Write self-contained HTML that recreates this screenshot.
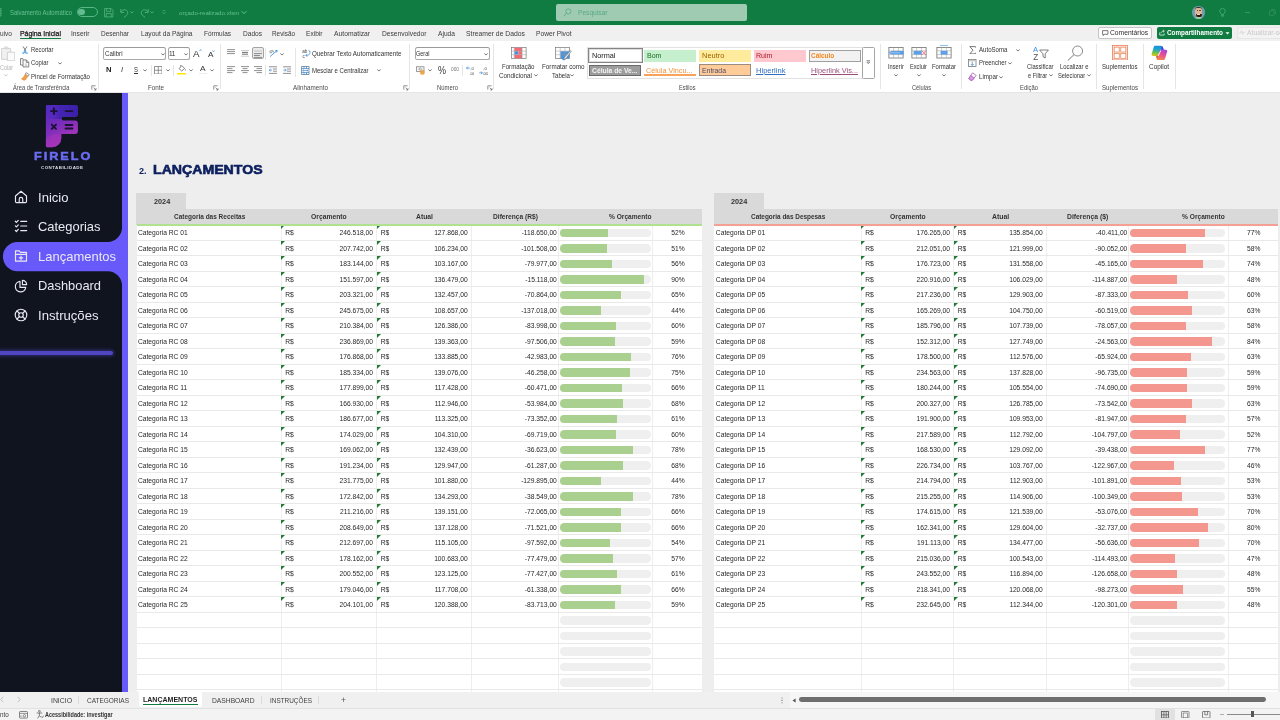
<!DOCTYPE html>
<html lang="pt-BR"><head><meta charset="utf-8"><title>orçado-realizado.xlsm - Excel</title>
<style>
html,body{margin:0;padding:0}
body{width:1280px;height:720px;overflow:hidden;position:relative;background:#eeeeee;font-family:"Liberation Sans",sans-serif;color:#262626}
div,span,svg{position:absolute;box-sizing:border-box}
.t{white-space:nowrap;transform-origin:0 50%;display:block}
.labels{left:0;top:0;width:1280px;height:720px;pointer-events:none}
#app{left:0;top:0;width:1280px;height:720px;overflow:hidden;will-change:transform}
/* title bar */
#title{left:0;top:0;width:1280px;height:25px;background:#107c41}
#search{left:556px;top:4px;width:191px;height:17px;border-radius:2px;background:#9fcbb3}
#tabs{left:0;top:25px;width:1280px;height:16px;background:#f0f0f0;border-top:0.7px solid #e3f3ea}
#ribbon{left:0;top:41px;width:1280px;height:51.4px;background:#ffffff}
#ribline{left:0;top:92.2px;width:1280px;height:0.8px;background:#e6e6e6}
.vsep{width:1px;background:#e5e5e5}
.box{border:1px solid #a8a8a8;border-top-color:#9a9a9a;border-radius:2.5px;background:#fff}
/* sidebar */
#side{left:0;top:93px;width:122.1px;height:599px;background:#10141f}
#strip{left:122px;top:93px;width:5.9px;height:599px;background:#6859fb}
/* sheet */
.tbl{background:#fff}
.hdr{background:#d9d9d9}
.row{left:0;width:100%;height:15.5px;border-bottom:1px solid #e9e9e9}
.c{top:0;height:15.5px;line-height:15.5px;font-size:6.7px;white-space:nowrap;color:#262626}
.r{text-align:right}
.vl{top:0;width:1px;background:#eeeeee}
.trk{height:8.5px;border-radius:4.25px;background:#efefef;overflow:hidden}
.fg{left:0;top:0;height:100%;background:#a9d08e}
.fr{left:0;top:0;height:100%;background:#f4978e}
.tri{width:0;height:0;border-top:4.2px solid #1e7a34;border-right:4.2px solid transparent}
/* bottom */
#sheettabs{left:0;top:692px;width:1280px;height:15.5px;background:#f0f0f0}
#status{left:0;top:707.5px;width:1280px;height:12.5px;background:#f3f3f3;border-top:1px solid #e1e1e1}

</style></head>
<body>
<div id="app">
<div id="title"></div>
<div id="search"></div>
<div id="tabs"></div>
<div id="ribbon"></div>
<div id="ribline"></div>
<svg style="left:-0.6px;top:8px;width:3px;height:9px" viewBox="0 0 3 9"><path d="M0 0.5H2M0 3H2M0 5.5H2M0 8H2M2 0.5V8" stroke="#58b687" stroke-width="0.8" fill="none"/></svg>
<div style="left:76.5px;top:7px;width:21px;height:10px;border:1px solid #58b687;border-radius:5px"></div>
<div style="left:78.2px;top:8.7px;width:6.5px;height:6.5px;border-radius:50%;background:#63bc8f"></div>
<svg style="left:104px;top:8px;width:9.5px;height:9.5px" viewBox="0 0 10 10"><path d="M0.6 0.6H7.6L9.4 2.4V9.4H0.6Z M2.6 0.6V3.6H7V0.6 M2.4 9.4V5.8H7.6V9.4" fill="none" stroke="#58b687" stroke-width="0.8"/></svg>
<svg style="left:119.5px;top:7.5px;width:9px;height:10px" viewBox="0 0 9 10"><path d="M0.8 1V4.4H4.2 M1 4.2C2.2 1.6 5.4 1 7 2.8C8.6 4.8 7.6 7.2 4 9.2" fill="none" stroke="#58b687" stroke-width="0.85"/></svg>
<svg style="left:129px;top:9.4px;width:6px;height:6px" viewBox="-3 -3 6 6"><path d="M-1.7 -0.5 L0 1.0 L1.7 -0.5" fill="none" stroke="#58b687" stroke-width="0.8"/></svg>
<svg style="left:140px;top:7.5px;width:9px;height:10px" viewBox="0 0 9 10"><path d="M8.2 1V4.4H4.8 M8 4.2C6.8 1.6 3.6 1 2 2.8C0.4 4.8 1.4 7.2 5 9.2" fill="none" stroke="#58b687" stroke-width="0.85"/></svg>
<svg style="left:149px;top:9.4px;width:6px;height:6px" viewBox="-3 -3 6 6"><path d="M-1.7 -0.5 L0 1.0 L1.7 -0.5" fill="none" stroke="#58b687" stroke-width="0.8"/></svg>
<svg style="left:161.5px;top:10px;width:4px;height:5px" viewBox="0 0 4 5"><path d="M0.6 0.6H3.4" stroke="#58b687" stroke-width="0.6"/><path d="M0.6 2.2L2 3.8L3.4 2.2" fill="none" stroke="#58b687" stroke-width="0.7"/></svg>
<svg style="left:240.7px;top:9.4px;width:6px;height:6px" viewBox="-3 -3 6 6"><path d="M-2.55 -0.75 L0 1.5 L2.55 -0.75" fill="none" stroke="#7acfa5" stroke-width="0.8"/></svg>
<svg style="left:563px;top:8px;width:9px;height:9px" viewBox="0 0 9 9"><circle cx="5.4" cy="3.4" r="2.6" fill="none" stroke="#5aa982" stroke-width="0.8"/><path d="M3.5 5.3L0.8 8.2" stroke="#5aa982" stroke-width="0.9"/></svg>
<div style="left:1192.4px;top:6.4px;width:12.4px;height:12.4px;border-radius:50%;background:#6f9db2;overflow:hidden"><div style="left:3px;top:0.6px;width:6.4px;height:3px;border-radius:3px 3px 0 0;background:#3b3122"></div><div style="left:3px;top:1.8px;width:6.4px;height:7.6px;border-radius:2px 2px 2.6px 2.6px;background:#dcb595"></div><div style="left:4.2px;top:3.8px;width:1.2px;height:0.7px;background:#6b4a38"></div><div style="left:7px;top:3.8px;width:1.2px;height:0.7px;background:#6b4a38"></div><div style="left:3.2px;top:7.4px;width:6px;height:3px;border-radius:1px 1px 3px 3px;background:#3a1509"></div><div style="left:5px;top:7.6px;width:2.4px;height:0.9px;background:#e8d8cc"></div><div style="left:2.4px;top:10.6px;width:7.6px;height:2.4px;border-radius:2px 2px 0 0;background:#a3cfa4"></div></div>
<svg style="left:1219.2px;top:7.6px;width:7px;height:10px" viewBox="0 0 7 10"><path d="M2.3 6.5C2.3 5.9 2 5.4 1.6 5A2.7 2.7 0 1 1 5.4 5C5 5.4 4.7 5.9 4.7 6.5Z M2.3 7.6H4.7 M2.7 8.7H4.3" fill="none" stroke="#4ab381" stroke-width="0.75"/></svg>
<div style="left:1245px;top:12px;width:5px;height:0.8px;background:#3a9764"></div>
<svg style="left:1269px;top:9px;width:7px;height:7px" viewBox="0 0 7 7"><rect x="0.5" y="1.8" width="4.6" height="4.6" rx="0.8" fill="none" stroke="#3a9764" stroke-width="0.7"/><path d="M1.9 0.6H5.2C5.9 0.6 6.4 1.1 6.4 1.8V5" fill="none" stroke="#3a9764" stroke-width="0.7"/></svg>
<div style="left:20px;top:38px;width:41px;height:1.2px;background:#107c41;border-radius:1px"></div>
<div style="left:1098px;top:26.5px;width:53.5px;height:12px;border:1px solid #c4c4c4;border-radius:2px;background:#fff"></div>
<svg style="left:1102px;top:29.5px;width:6.5px;height:6.5px" viewBox="0 0 7 7"><path d="M0.6 0.7H6.4V4.6H2.6L1.4 6V4.6H0.6Z" fill="none" stroke="#333" stroke-width="0.7"/></svg>
<div style="left:1156.5px;top:26.5px;width:75px;height:12px;border-radius:2px;background:#107c41"></div>
<svg style="left:1159px;top:29px;width:6.5px;height:7px" viewBox="0 0 7 7"><path d="M0.8 3.4V6.3H5.6V4.6 M2.2 4C2.6 2.6 3.6 2 5 2 M4.2 0.7L5.8 2L4.2 3.4" fill="none" stroke="#fff" stroke-width="0.75"/></svg>
<svg style="left:1225px;top:31.5px;width:5px;height:3px" viewBox="0 0 5 3"><path d="M0.5 0.3L2.5 2.5L4.5 0.3Z" fill="#fff"/></svg>
<div style="left:1236.5px;top:26.5px;width:50px;height:12px;border:1px solid #e6e6e6;border-radius:2px;background:#f3f3f3"></div>
<svg style="left:1239px;top:30px;width:6px;height:5px" viewBox="0 0 6 5"><path d="M0.3 3H1.6L2.6 0.8L3.6 4.2L4.4 2.4H5.7" fill="none" stroke="#c9c9c9" stroke-width="0.6"/></svg>
<div class="vsep" style="left:98.0px;top:44px;height:45px"></div>
<div class="vsep" style="left:220.0px;top:44px;height:45px"></div>
<div class="vsep" style="left:409.0px;top:44px;height:45px"></div>
<div class="vsep" style="left:493.0px;top:44px;height:45px"></div>
<div class="vsep" style="left:880.0px;top:44px;height:45px"></div>
<div class="vsep" style="left:961.0px;top:44px;height:45px"></div>
<div class="vsep" style="left:1096.0px;top:44px;height:45px"></div>
<div class="vsep" style="left:1143.0px;top:44px;height:45px"></div>
<div class="vsep" style="left:1175.0px;top:44px;height:45px"></div>
<div class="vsep" style="left:150.5px;top:64.5px;height:11.5px"></div>
<div class="vsep" style="left:173.0px;top:64.5px;height:11.5px"></div>
<div class="vsep" style="left:265.0px;top:47.5px;height:12.0px"></div>
<div class="vsep" style="left:265.0px;top:64.5px;height:11.5px"></div>
<div class="vsep" style="left:295.0px;top:47.5px;height:29.5px"></div>
<div class="vsep" style="left:462.0px;top:64.5px;height:11.5px"></div>
<svg style="left:91.3px;top:84.5px;width:6px;height:6px" viewBox="0 0 6 6"><path d="M0.8 4.6V0.8H4.6" fill="none" stroke="#666" stroke-width="0.7"/><path d="M2.6 2.6L5 5M5 3.2V5H3.2" fill="none" stroke="#666" stroke-width="0.7"/></svg>
<svg style="left:213.4px;top:84.5px;width:6px;height:6px" viewBox="0 0 6 6"><path d="M0.8 4.6V0.8H4.6" fill="none" stroke="#666" stroke-width="0.7"/><path d="M2.6 2.6L5 5M5 3.2V5H3.2" fill="none" stroke="#666" stroke-width="0.7"/></svg>
<svg style="left:402.5px;top:84.5px;width:6px;height:6px" viewBox="0 0 6 6"><path d="M0.8 4.6V0.8H4.6" fill="none" stroke="#666" stroke-width="0.7"/><path d="M2.6 2.6L5 5M5 3.2V5H3.2" fill="none" stroke="#666" stroke-width="0.7"/></svg>
<svg style="left:486.5px;top:84.5px;width:6px;height:6px" viewBox="0 0 6 6"><path d="M0.8 4.6V0.8H4.6" fill="none" stroke="#666" stroke-width="0.7"/><path d="M2.6 2.6L5 5M5 3.2V5H3.2" fill="none" stroke="#666" stroke-width="0.7"/></svg>
<svg style="left:0.5px;top:45.5px;width:14.5px;height:15.5px" viewBox="0 0 15 16"><path d="M0.6 2.6H10V13.8H0.6Z" fill="#f1f1f1" stroke="#c8c8c8" stroke-width="0.8"/><path d="M3.2 2.8V1.6L5.3 0.5L7.4 1.6V2.8Z" fill="#eee" stroke="#c8c8c8" stroke-width="0.7"/><path d="M6.6 6.4H14.2V15.2H6.6Z" fill="#fbfbfb" stroke="#c8c8c8" stroke-width="0.8"/></svg>
<svg style="left:3px;top:72.3px;width:6px;height:6px" viewBox="-3 -3 6 6"><path d="M-1.7 -0.5 L0 1.0 L1.7 -0.5" fill="none" stroke="#c0c0c0" stroke-width="0.8"/></svg>
<svg style="left:21.5px;top:45.5px;width:6px;height:8.5px" viewBox="0 0 6 8.5"><path d="M1 0.4L3.6 4.6 M5 0.4L2.4 4.6" stroke="#555" stroke-width="0.75" fill="none"/><path d="M3.5 4.2L1.9 7.6C1.5 8.3 0.5 7.9 0.8 7.1L1.6 5.6 M2.5 4.2L4.1 7.6C4.5 8.3 5.5 7.9 5.2 7.1L4.4 5.6" fill="none" stroke="#2b88d8" stroke-width="0.75"/></svg>
<svg style="left:20px;top:58px;width:9.5px;height:9.5px" viewBox="0 0 10 10"><path d="M3 1.6V0.6H0.6V7.4H3" fill="none" stroke="#555" stroke-width="0.75"/><path d="M3.2 2H6.8L9.2 4.4V9.4H3.2Z M6.6 2.2V4.6H9" fill="#fff" stroke="#555" stroke-width="0.75"/><path d="M5 6.4H7.6M5 7.8H7.6" stroke="#8a8a8a" stroke-width="0.5"/></svg>
<svg style="left:56.5px;top:60.2px;width:6px;height:6px" viewBox="-3 -3 6 6"><path d="M-1.7 -0.5 L0 1.0 L1.7 -0.5" fill="none" stroke="#555" stroke-width="0.8"/></svg>
<svg style="left:20.5px;top:71.5px;width:9px;height:9px" viewBox="0 0 9 9"><path d="M5.2 0.6L8.2 2.6L7.2 4.2L4.2 2.2Z" fill="#fff" stroke="#555" stroke-width="0.6"/><path d="M4 2.6L6.8 4.6L4.6 7.8C3.2 8.6 1.4 8 0.5 6.6C1.6 6.4 3 4.6 4 2.6Z" fill="#f0a24c" stroke="#d9822b" stroke-width="0.5"/></svg>
<div class="box" style="left:102.5px;top:47px;width:63px;height:12.5px"></div>
<svg style="left:159.5px;top:50.5px;width:6px;height:6px" viewBox="-3 -3 6 6"><path d="M-1.7 -0.5 L0 1.0 L1.7 -0.5" fill="none" stroke="#555" stroke-width="0.8"/></svg>
<div class="box" style="left:167.5px;top:47px;width:22px;height:12.5px"></div>
<svg style="left:183px;top:50.5px;width:6px;height:6px" viewBox="-3 -3 6 6"><path d="M-1.7 -0.5 L0 1.0 L1.7 -0.5" fill="none" stroke="#555" stroke-width="0.8"/></svg>
<svg style="left:198.5px;top:49px;width:3px;height:2.5px" viewBox="0 0 3 2.5"><path d="M0.3 2.2L1.5 0.6L2.7 2.2" fill="none" stroke="#2b88d8" stroke-width="0.6"/></svg>
<svg style="left:212px;top:50px;width:3px;height:2.5px" viewBox="0 0 3 2.5"><path d="M0.3 0.4L1.5 2L2.7 0.4" fill="none" stroke="#2b88d8" stroke-width="0.6"/></svg>
<svg style="left:142px;top:66.8px;width:6px;height:6px" viewBox="-3 -3 6 6"><path d="M-1.7 -0.5 L0 1.0 L1.7 -0.5" fill="none" stroke="#555" stroke-width="0.8"/></svg>
<svg style="left:153.5px;top:65.5px;width:8.5px;height:8.5px" viewBox="0 0 8.5 8.5"><path d="M0.5 0.5H8V8H0.5Z M4.25 0.5V8 M0.5 4.25H8" fill="none" stroke="#6a6a6a" stroke-width="0.7"/></svg>
<svg style="left:164.8px;top:66.8px;width:6px;height:6px" viewBox="-3 -3 6 6"><path d="M-1.7 -0.5 L0 1.0 L1.7 -0.5" fill="none" stroke="#555" stroke-width="0.8"/></svg>
<svg style="left:177px;top:64px;width:10px;height:10.5px" viewBox="0 0 10 10.5"><path d="M2 4.6L4.8 1.6L7.6 4.4L4.8 7Z" fill="#fff" stroke="#555" stroke-width="0.7"/><path d="M3.6 2.6V1" stroke="#555" stroke-width="0.6"/><path d="M8 5C8.6 5.8 8.8 6.2 8.4 6.6C8 6.9 7.6 6.4 8 5Z" fill="#555"/><path d="M0 9H9V10.5H0Z" fill="#ffe500"/></svg>
<svg style="left:187.8px;top:66.8px;width:6px;height:6px" viewBox="-3 -3 6 6"><path d="M-1.7 -0.5 L0 1.0 L1.7 -0.5" fill="none" stroke="#555" stroke-width="0.8"/></svg>
<div style="left:198.5px;top:72.6px;width:8.5px;height:1.4px;background:#ececec"></div>
<svg style="left:209px;top:66.8px;width:6px;height:6px" viewBox="-3 -3 6 6"><path d="M-1.7 -0.5 L0 1.0 L1.7 -0.5" fill="none" stroke="#555" stroke-width="0.8"/></svg>
<svg style="left:227px;top:49.2px;width:8px;height:7.0px" viewBox="0 0 8 7.0"><path d="M0 0.6H8" stroke="#555" stroke-width="0.65"/><path d="M0 2.6H8" stroke="#555" stroke-width="0.65"/><path d="M0 4.6H8" stroke="#555" stroke-width="0.65"/></svg>
<svg style="left:240.5px;top:49.5px;width:8px;height:7px" viewBox="0 0 8 7"><path d="M0 0.5H8" stroke="#b5b5b5" stroke-width="0.7"/><path d="M1 2.4H7M1 4.2H7" stroke="#4a4a4a" stroke-width="0.8"/><path d="M0 6.2H8" stroke="#b5b5b5" stroke-width="0.7"/></svg>
<div style="left:251.5px;top:47.3px;width:12.5px;height:12.2px;border:1px solid #a3a3a3;border-radius:2px;background:#ebebeb"></div>
<div style="left:253.7px;top:50px;width:8px;height:1.6px;background:#d6d6d6"></div>
<svg style="left:253.7px;top:52.9px;width:8px;height:6.699999999999999px" viewBox="0 0 8 6.699999999999999"><path d="M0 0.6H8" stroke="#555" stroke-width="0.65"/><path d="M0 2.5H6" stroke="#555" stroke-width="0.65"/><path d="M0 4.3999999999999995H8" stroke="#555" stroke-width="0.65"/></svg>
<svg style="left:268.5px;top:48.5px;width:9.5px;height:9px" viewBox="0 0 9.5 9"><path d="M1 7.6L8 1.6 M8.2 1.4L6.2 1.8 M8.2 1.4L7.8 3.4" fill="none" stroke="#2b88d8" stroke-width="0.8"/><path d="M0.8 3.6C0.6 1.6 2.4 1 3 2.2C3.4 3.2 2.2 4.6 1.2 3.8 M3.6 0.8L4.6 3.4" fill="none" stroke="#555" stroke-width="0.6"/></svg>
<svg style="left:278.5px;top:50.6px;width:6px;height:6px" viewBox="-3 -3 6 6"><path d="M-1.7 -0.5 L0 1.0 L1.7 -0.5" fill="none" stroke="#555" stroke-width="0.8"/></svg>
<svg style="left:301.5px;top:48.5px;width:9px;height:10px" viewBox="0 0 9 10"><text x="0.2" y="4" font-size="4.6" fill="#444" font-family="Liberation Sans, sans-serif">ab</text><text x="0.4" y="8.6" font-size="4.6" fill="#444" font-family="Liberation Sans, sans-serif">c</text><path d="M6.4 1.2C8.4 1.6 8.6 4.6 6.8 5.8C6 6.3 5.2 6.4 4 6.4 M5.2 5L3.8 6.4L5.2 7.8" fill="none" stroke="#2b88d8" stroke-width="0.75"/></svg>
<svg style="left:227px;top:66.2px;width:8px;height:9.0px" viewBox="0 0 8 9.0"><path d="M0 0.6H8" stroke="#555" stroke-width="0.65"/><path d="M0 2.6H5.5" stroke="#555" stroke-width="0.65"/><path d="M0 4.6H8" stroke="#555" stroke-width="0.65"/><path d="M0 6.6H5.5" stroke="#555" stroke-width="0.65"/></svg>
<svg style="left:240.5px;top:66.2px;width:8px;height:9.0px" viewBox="0 0 8 9.0"><path d="M0.0 0.6H8.0" stroke="#555" stroke-width="0.65"/><path d="M1.5 2.6H6.5" stroke="#555" stroke-width="0.65"/><path d="M0.0 4.6H8.0" stroke="#555" stroke-width="0.65"/><path d="M1.5 6.6H6.5" stroke="#555" stroke-width="0.65"/></svg>
<svg style="left:254px;top:66.2px;width:8px;height:9.0px" viewBox="0 0 8 9.0"><path d="M0 0.6H8" stroke="#555" stroke-width="0.65"/><path d="M2.5 2.6H8.0" stroke="#555" stroke-width="0.65"/><path d="M0 4.6H8" stroke="#555" stroke-width="0.65"/><path d="M2.5 6.6H8.0" stroke="#555" stroke-width="0.65"/></svg>
<svg style="left:269px;top:66px;width:8px;height:8px" viewBox="0 0 8 8"><path d="M0 0.8H8M4 3H8M4 5.2H8M0 7.4H8" stroke="#555" stroke-width="0.65"/><path d="M3.2 4.1H0.3 M1.6 2.7L0.3 4.1L1.6 5.5" fill="none" stroke="#2b88d8" stroke-width="0.7"/></svg>
<svg style="left:282.5px;top:66px;width:8px;height:8px" viewBox="0 0 8 8"><path d="M0 0.8H8M4 3H8M4 5.2H8M0 7.4H8" stroke="#555" stroke-width="0.65"/><path d="M0.3 4.1H3.2 M1.9 2.7L3.2 4.1L1.9 5.5" fill="none" stroke="#2b88d8" stroke-width="0.7"/></svg>
<svg style="left:301px;top:65.5px;width:8.5px;height:9px" viewBox="0 0 8.5 9"><path d="M0.5 0.5H8V8.5H0.5Z" fill="none" stroke="#5a6b80" stroke-width="0.7"/><path d="M0.5 2.6H8 M0.5 6.4H8 M3 0.5V2.6 M5.5 0.5V2.6 M3 6.4V8.5 M5.5 6.4V8.5" fill="none" stroke="#2b7cd3" stroke-width="0.7"/><path d="M1.6 4.5H6.9 M2.6 3.6L1.6 4.5L2.6 5.4 M5.9 3.6L6.9 4.5L5.9 5.4" fill="none" stroke="#2b7cd3" stroke-width="0.6"/></svg>
<svg style="left:375.5px;top:67.4px;width:6px;height:6px" viewBox="-3 -3 6 6"><path d="M-1.7 -0.5 L0 1.0 L1.7 -0.5" fill="none" stroke="#555" stroke-width="0.8"/></svg>
<div class="box" style="left:414.5px;top:47px;width:75px;height:12.5px"></div>
<svg style="left:483px;top:50.5px;width:6px;height:6px" viewBox="-3 -3 6 6"><path d="M-1.7 -0.5 L0 1.0 L1.7 -0.5" fill="none" stroke="#555" stroke-width="0.8"/></svg>
<svg style="left:416px;top:66px;width:9px;height:8.5px" viewBox="0 0 9 8.5"><rect x="0.4" y="0.8" width="7.6" height="4.6" fill="#f4f4f4" stroke="#666" stroke-width="0.6"/><circle cx="4.2" cy="3.1" r="1.2" fill="none" stroke="#666" stroke-width="0.5"/><ellipse cx="6.4" cy="5.2" rx="2.1" ry="0.9" fill="#f5b25b" stroke="#d98f2b" stroke-width="0.4"/><ellipse cx="6.4" cy="6.4" rx="2.1" ry="0.9" fill="#f5b25b" stroke="#d98f2b" stroke-width="0.4"/><ellipse cx="6.4" cy="7.5" rx="2.1" ry="0.9" fill="#f5b25b" stroke="#d98f2b" stroke-width="0.4"/></svg>
<svg style="left:427px;top:67px;width:6px;height:6px" viewBox="-3 -3 6 6"><path d="M-1.7 -0.5 L0 1.0 L1.7 -0.5" fill="none" stroke="#555" stroke-width="0.8"/></svg>
<svg style="left:465.6px;top:65.5px;width:8.5px;height:9px" viewBox="0 0 8.5 9"><path d="M3.8 2H0.5 M1.9 0.6L0.5 2L1.9 3.4" fill="none" stroke="#2b88d8" stroke-width="0.7"/><text x="4.2" y="3.9" font-size="4.3" fill="#444" font-family="Liberation Sans, sans-serif">,0</text><text x="3.4" y="8.5" font-size="4.3" fill="#444" font-family="Liberation Sans, sans-serif">,00</text></svg>
<svg style="left:479px;top:65.5px;width:8.5px;height:9px" viewBox="0 0 8.5 9"><path d="M0.2 6.8H3.4 M2 5.4L3.4 6.8L2 8.2" fill="none" stroke="#2b88d8" stroke-width="0.7"/><text x="4.2" y="3.9" font-size="4.3" fill="#444" font-family="Liberation Sans, sans-serif">,0</text><text x="3.4" y="8.5" font-size="4.3" fill="#444" font-family="Liberation Sans, sans-serif">,00</text></svg>
<svg style="left:511px;top:47px;width:15.5px;height:12px" viewBox="0 0 15.5 12"><rect x="0.4" y="0.4" width="14.7" height="11.2" fill="#fff" stroke="#777" stroke-width="0.7"/><rect x="3.4" y="0.8" width="7.6" height="3.2" fill="#f26b73"/><rect x="3.4" y="4.2" width="4" height="3.4" fill="#4a8fdc"/><rect x="7.4" y="4.2" width="3.6" height="3.4" fill="#f26b73"/><rect x="3.4" y="7.8" width="7.6" height="3.4" fill="#f26b73"/><path d="M3.2 0.4V11.6 M11.2 0.4V11.6 M0.4 4.1H15 M0.4 7.7H15" stroke="#9a9a9a" stroke-width="0.5" fill="none"/></svg>
<svg style="left:532.5px;top:72.4px;width:6px;height:6px" viewBox="-3 -3 6 6"><path d="M-1.7 -0.5 L0 1.0 L1.7 -0.5" fill="none" stroke="#555" stroke-width="0.8"/></svg>
<svg style="left:555px;top:47px;width:16.5px;height:14px" viewBox="0 0 16.5 14"><rect x="0.4" y="0.4" width="14.2" height="11.2" fill="#fff" stroke="#777" stroke-width="0.7"/><rect x="5.4" y="4.2" width="9" height="7.2" fill="#4a95e0"/><path d="M5.2 0.4V11.6 M10 0.4V11.6 M0.4 4.1H14.6 M0.4 7.7H14.6" stroke="#9a9a9a" stroke-width="0.5" fill="none"/><path d="M15.6 3.4L9.6 10.2L8.6 12.6L11 11.6L16.2 4.6Z" fill="#e8e8e8" stroke="#666" stroke-width="0.5"/><path d="M6.4 10.6C7 12.8 9 13.6 10.4 12.6" fill="#4a95e0" stroke="#3a7fca" stroke-width="0.4"/></svg>
<svg style="left:569.3px;top:72.4px;width:6px;height:6px" viewBox="-3 -3 6 6"><path d="M-1.7 -0.5 L0 1.0 L1.7 -0.5" fill="none" stroke="#555" stroke-width="0.8"/></svg>
<div style="left:587px;top:47px;width:275.5px;height:31.5px;background:#fff;border:1px solid #e2e2e2"></div>
<div style="left:588px;top:48px;width:54.6px;height:14.5px;background:#fff;border:1px solid #858585;box-shadow:inset 0 0 0 1px #dedede"></div>
<div style="left:589px;top:64.5px;width:52.2px;height:11.4px;background:#9d9d9d;border:1px solid #6a6a6a"></div>
<div style="left:644px;top:50px;width:52px;height:11.5px;background:#c6efce"></div>
<div style="left:699px;top:50px;width:52px;height:11.5px;background:#ffeb9c"></div>
<div style="left:754px;top:50px;width:52px;height:11.5px;background:#ffc7ce"></div>
<div style="left:808.5px;top:50px;width:52.5px;height:11.5px;background:#f2f2f2;border:1px solid #a0a0a0"></div>
<div style="left:644px;top:74px;width:52px;height:1.6px;background:#f7a35c"></div>
<div style="left:699px;top:64.2px;width:52px;height:11.8px;background:#ffcc99;border:1px solid #9c8c80"></div>
<div style="left:862px;top:47.3px;width:12.8px;height:31.4px;background:#fff;border:1px solid #a6a6a6;border-radius:1.5px"></div>
<svg style="left:866.3px;top:60.4px;width:4.6px;height:4.6px" viewBox="0 0 4.6 4.6"><path d="M0.6 0.6H4" stroke="#555" stroke-width="0.6"/><path d="M0.8 2L2.3 3.8L3.8 2Z" fill="none" stroke="#555" stroke-width="0.6"/></svg>
<svg style="left:887.5px;top:45px;width:16px;height:13.5px" viewBox="0 0 16 13.5"><rect x="0.9" y="2.4" width="14.2" height="10.6" fill="#fff" stroke="#686868" stroke-width="0.75"/><path d="M5.6 2.4V13 M10.4 2.4V13 M0.9 5.8H15.1 M0.9 9.6H15.1" stroke="#9a9a9a" stroke-width="0.5" fill="none"/><path d="M3.4 5.9H15.8V9.6H3.4L0.4 7.75Z" fill="#5b9fe6"/><path d="M2.2 7.75H12" stroke="#dbeafb" stroke-width="0.5"/></svg>
<svg style="left:910.5px;top:45px;width:16px;height:13.5px" viewBox="0 0 16 13.5"><rect x="0.9" y="2.4" width="14.2" height="10.6" fill="#fff" stroke="#686868" stroke-width="0.75"/><path d="M5.6 2.4V13 M10.4 2.4V13 M0.9 5.8H15.1 M0.9 9.6H15.1" stroke="#9a9a9a" stroke-width="0.5" fill="none"/><rect x="2.6" y="5.9" width="8" height="3.7" fill="#5b9fe6"/><path d="M10.6 5.6L15 10M15 5.6L10.6 10" stroke="#f0616d" stroke-width="0.8"/></svg>
<svg style="left:935.5px;top:45px;width:16px;height:13.5px" viewBox="0 0 16 13.5"><rect x="0.9" y="2.4" width="14.2" height="10.6" fill="#fff" stroke="#686868" stroke-width="0.75"/><path d="M5.6 2.4V13 M10.4 2.4V13 M0.9 5.8H15.1 M0.9 9.6H15.1" stroke="#9a9a9a" stroke-width="0.5" fill="none"/><rect x="4.6" y="5.9" width="7" height="3.7" fill="#5b9fe6"/><path d="M4 0.5H12" stroke="#5b9fe6" stroke-width="0.7"/></svg>
<svg style="left:892.5px;top:72.2px;width:6px;height:6px" viewBox="-3 -3 6 6"><path d="M-1.7 -0.5 L0 1.0 L1.7 -0.5" fill="none" stroke="#555" stroke-width="0.8"/></svg>
<svg style="left:915.5px;top:72.2px;width:6px;height:6px" viewBox="-3 -3 6 6"><path d="M-1.7 -0.5 L0 1.0 L1.7 -0.5" fill="none" stroke="#555" stroke-width="0.8"/></svg>
<svg style="left:940.5px;top:72.2px;width:6px;height:6px" viewBox="-3 -3 6 6"><path d="M-1.7 -0.5 L0 1.0 L1.7 -0.5" fill="none" stroke="#555" stroke-width="0.8"/></svg>
<svg style="left:968.5px;top:45.5px;width:7px;height:8.5px" viewBox="0 0 7 8.5"><path d="M6.4 1.6V0.6H0.8L4 4.2L0.8 7.9H6.4V6.8" fill="none" stroke="#4a4a4a" stroke-width="0.75"/></svg>
<svg style="left:1015px;top:46.6px;width:6px;height:6px" viewBox="-3 -3 6 6"><path d="M-1.7 -0.5 L0 1.0 L1.7 -0.5" fill="none" stroke="#555" stroke-width="0.8"/></svg>
<svg style="left:968px;top:59px;width:8.5px;height:8px" viewBox="0 0 8.5 8"><rect x="0.5" y="0.5" width="7.5" height="7" fill="#fff" stroke="#666" stroke-width="0.7"/><rect x="0.9" y="0.9" width="6.7" height="1.4" fill="#c8c8c8"/><path d="M4.25 2.8V6.4 M2.8 5L4.25 6.5L5.7 5" fill="none" stroke="#2b88d8" stroke-width="0.7"/></svg>
<svg style="left:1006.5px;top:60.2px;width:6px;height:6px" viewBox="-3 -3 6 6"><path d="M-1.7 -0.5 L0 1.0 L1.7 -0.5" fill="none" stroke="#555" stroke-width="0.8"/></svg>
<svg style="left:967.5px;top:71.5px;width:9px;height:9px" viewBox="0 0 9 9"><path d="M4.6 0.8L8.2 3.4L4.4 8.2H2.4L0.8 6.6Z" fill="#fff" stroke="#a24bb0" stroke-width="0.7"/><path d="M2.7 3.3L6.2 5.9L4.4 8.2H2.4L0.8 6.6Z" fill="#d69be0" stroke="#a24bb0" stroke-width="0.6"/></svg>
<svg style="left:998px;top:73.6px;width:6px;height:6px" viewBox="-3 -3 6 6"><path d="M-1.7 -0.5 L0 1.0 L1.7 -0.5" fill="none" stroke="#555" stroke-width="0.8"/></svg>
<svg style="left:1032.5px;top:45.5px;width:16.5px;height:15px" viewBox="0 0 16.5 15"><text x="0" y="6.2" font-size="7.6" fill="#3a8ee0" font-family="Liberation Sans, sans-serif">A</text><text x="0.2" y="14.2" font-size="8.2" fill="#555" font-family="Liberation Sans, sans-serif">Z</text><path d="M6.6 4H15.4L12.2 7.8V12L10 10.6V7.8Z" fill="#fff" stroke="#555" stroke-width="0.75"/></svg>
<svg style="left:1048px;top:72.4px;width:6px;height:6px" viewBox="-3 -3 6 6"><path d="M-1.7 -0.5 L0 1.0 L1.7 -0.5" fill="none" stroke="#555" stroke-width="0.8"/></svg>
<svg style="left:1066.5px;top:44.5px;width:16.5px;height:16.5px" viewBox="0 0 16.5 16.5"><circle cx="10.6" cy="6" r="5" fill="#fff" stroke="#666" stroke-width="0.75"/><path d="M7 9.6L0.8 15.6" stroke="#666" stroke-width="0.9"/></svg>
<svg style="left:1085.5px;top:72.4px;width:6px;height:6px" viewBox="-3 -3 6 6"><path d="M-1.7 -0.5 L0 1.0 L1.7 -0.5" fill="none" stroke="#555" stroke-width="0.8"/></svg>
<svg style="left:1112px;top:44.5px;width:16px;height:15.5px" viewBox="0 0 16 15.5"><rect x="0.5" y="0.5" width="15" height="14.5" fill="#fbe3d8" stroke="#e8825a" stroke-width="0.8"/><rect x="2.2" y="2.2" width="5" height="4.8" fill="#fff" stroke="#e8825a" stroke-width="0.7"/><rect x="8.8" y="2.2" width="5" height="4.8" fill="#fff" stroke="#e8825a" stroke-width="0.7"/><rect x="2.2" y="8.5" width="5" height="4.8" fill="#fff" stroke="#e8825a" stroke-width="0.7"/><rect x="8.8" y="8.5" width="5" height="4.8" fill="#fff" stroke="#e8825a" stroke-width="0.7"/></svg>
<svg style="left:1151px;top:45px;width:17px;height:15.5px" viewBox="0 0 17 15.5"><defs><linearGradient id="cp1" x1="0.3" y1="0" x2="0.2" y2="1"><stop offset="0" stop-color="#1a8fe0"/><stop offset="0.35" stop-color="#22a6c8"/><stop offset="0.65" stop-color="#6cbf4a"/><stop offset="1" stop-color="#e0c81e"/></linearGradient><linearGradient id="cp2" x1="0.6" y1="0" x2="0.3" y2="1"><stop offset="0" stop-color="#a946dc"/><stop offset="0.45" stop-color="#e64c96"/><stop offset="1" stop-color="#f4884a"/></linearGradient><linearGradient id="cp3" x1="0" y1="0" x2="1" y2="1"><stop offset="0" stop-color="#0d3fc0"/><stop offset="1" stop-color="#5a4be0"/></linearGradient></defs><path d="M8.4 0.9H10.2C11.4 0.9 11.9 1.8 12.3 3L12.9 4.9H10.4Z" fill="url(#cp3)"/><path d="M4.2 0.8H9.8C10.8 0.8 11 1.6 10.7 2.5L8.2 9.6C7.9 10.5 7.3 10.9 6.4 10.9H2C0.8 10.9 0.3 10 0.7 8.8L2.7 2.2C3 1.3 3.4 0.8 4.2 0.8Z" fill="url(#cp1)"/><path d="M5.6 10.6H7.2L8.6 14.9H7.2C6.4 14.9 5.9 14.4 5.6 13.5L5 11.6Z" fill="#e2562c"/><path d="M10.8 4.7H14.8C16 4.7 16.5 5.6 16.1 6.8L14.1 13.4C13.8 14.4 13.2 14.9 12.3 14.9H7C6.1 14.9 5.8 14.2 6.1 13.3L8.6 6.1C8.9 5.2 9.8 4.7 10.8 4.7Z" fill="url(#cp2)"/><path d="M9.6 5.2L10.2 5.6L7.6 10.9L6.6 10.8Z" fill="#fff"/></svg>
<div id="side"></div>
<div id="strip"></div>
<svg style="left:0;top:220px;width:128px;height:76px" viewBox="0 220 128 76"><path d="M122.1 226.8 A14.4 15.2 0 0 1 107.7 242 H17.5 A14.6 14.6 0 0 0 17.5 271.2 H107.7 A14.4 15 0 0 1 122.1 286.2 Z" fill="#6859fb"/></svg>
<div style="left:-4px;top:351px;width:117px;height:4.4px;border-radius:2.2px;background:#5046c2;box-shadow:0 0 3.5px 1.2px rgba(80,70,194,0.45)"></div>
<svg style="left:44px;top:103px;width:36px;height:46px" viewBox="44 103 36 46"><defs><linearGradient id="lg1" gradientUnits="userSpaceOnUse" x1="50" y1="106" x2="70" y2="142"><stop offset="0" stop-color="#5129c4"/><stop offset="0.5" stop-color="#7a2dba"/><stop offset="1" stop-color="#ae38b8"/></linearGradient><linearGradient id="lg2" gradientUnits="userSpaceOnUse" x1="46" y1="108" x2="78" y2="114"><stop offset="0" stop-color="#5129c4" stop-opacity="0"/><stop offset="0.45" stop-color="#3e23b0" stop-opacity="0.85"/><stop offset="1" stop-color="#371fa8"/></linearGradient><clipPath id="fclip"><path d="M47 104.9 H75.2 A2.7 2.7 0 0 1 77.9 107.6 V113.7 A3 3 0 0 1 74.9 116.7 H63.4 A1.9 1.9 0 0 0 63.4 120.5 H74.9 A3 3 0 0 1 77.9 123.5 V131 A3 3 0 0 1 74.9 134 H61.3 V138.2 A9 9 0 0 1 52.3 147.2 H47 A1.1 1.1 0 0 1 45.9 146.1 V106 A1.1 1.1 0 0 1 47 104.9 Z"/></clipPath></defs><path d="M47 104.9 H75.2 A2.7 2.7 0 0 1 77.9 107.6 V113.7 A3 3 0 0 1 74.9 116.7 H63.4 A1.9 1.9 0 0 0 63.4 120.5 H74.9 A3 3 0 0 1 77.9 123.5 V131 A3 3 0 0 1 74.9 134 H61.3 V138.2 A9 9 0 0 1 52.3 147.2 H47 A1.1 1.1 0 0 1 45.9 146.1 V106 A1.1 1.1 0 0 1 47 104.9 Z" fill="url(#lg1)"/><g clip-path="url(#fclip)"><path d="M46 104 H79 V119 H46 Z" fill="url(#lg2)"/><path d="M45 141 C48 134.5 55 133.2 62 134.2 V148 H45 Z" fill="#a834bc" opacity="0.5"/></g><g stroke="#1a1233" stroke-width="1.9" stroke-linecap="round"><path d="M51 111.1 H56.8 M53.9 108.2 V114"/><path d="M65.6 111.1 H72.4"/><path d="M51.8 124.6 L56 128.8 M56 124.6 L51.8 128.8"/><path d="M65.6 125 H72.4 M65.6 128.5 H72.4"/></g></svg>
<svg style="left:14.2px;top:189.5px;width:14px;height:14px" viewBox="0 0 15 15"><path d="M1.6 6.4 L7.5 1.4 L13.4 6.4 V12.4 A1.2 1.2 0 0 1 12.2 13.6 H2.8 A1.2 1.2 0 0 1 1.6 12.4 Z M5.6 13.4 V9.8 A1.9 1.9 0 0 1 9.4 9.8 V13.4" fill="none" stroke="#e9e9f1" stroke-width="1.25" stroke-linecap="round" stroke-linejoin="round"/></svg>
<svg style="left:14.2px;top:219.0px;width:14px;height:14px" viewBox="0 0 15 15"><path d="M7.2 2.6 H13.6 M7.2 7.5 H13.6 M7.2 12.4 H13.6 M1.4 2.4 L2.6 3.6 L4.6 1.4 M1.4 7.3 L2.6 8.5 L4.6 6.3 M1.4 12.2 L2.6 13.4 L4.6 11.2" fill="none" stroke="#e9e9f1" stroke-width="1.25" stroke-linecap="round" stroke-linejoin="round"/></svg>
<svg style="left:14.2px;top:249.0px;width:14px;height:14px" viewBox="0 0 15 15"><path d="M1.6 2 H5.6 L7 3.6 H13.4 V13 H1.6 Z M1.6 5.8 H13.4 M7.5 7.6 V11.4 M5.6 9.5 H9.4" fill="none" stroke="#e9e9f1" stroke-width="1.25" stroke-linecap="round" stroke-linejoin="round"/></svg>
<svg style="left:14.2px;top:278.5px;width:14px;height:14px" viewBox="0 0 15 15"><path d="M6.4 2.6 A5.6 5.6 0 1 0 12.6 9 H6.4 Z M9 1.4 A4.6 4.6 0 0 1 13.6 6 H9 Z" fill="none" stroke="#e9e9f1" stroke-width="1.25" stroke-linecap="round" stroke-linejoin="round"/></svg>
<svg style="left:14.2px;top:308.0px;width:14px;height:14px" viewBox="0 0 15 15"><circle cx="7.5" cy="7.5" r="6.2" fill="none" stroke="#e9e9f1" stroke-width="1.25" stroke-linecap="round" stroke-linejoin="round"/><circle cx="7.5" cy="7.5" r="2.4" fill="none" stroke="#e9e9f1" stroke-width="1.25" stroke-linecap="round" stroke-linejoin="round"/><path d="M3.2 3.2 L5.8 5.8 M11.8 3.2 L9.2 5.8 M3.2 11.8 L5.8 9.2 M11.8 11.8 L9.2 9.2" fill="none" stroke="#e9e9f1" stroke-width="1.25" stroke-linecap="round" stroke-linejoin="round"/></svg>
<div class="hdr" style="left:136px;top:192.7px;width:50.30000000000001px;height:17px"></div>
<div class="hdr" style="left:136px;top:209.0px;width:565.75px;height:16.0px"></div>
<div class="tbl" style="left:136.6px;top:225.0px;width:565.15px;height:467.0px;overflow:hidden">
<div class="vl" style="left:144.15px;height:467.0px"></div><div class="vl" style="left:239.65px;height:467.0px"></div><div class="vl" style="left:334.15px;height:467.0px"></div><div class="vl" style="left:421.15px;height:467.0px"></div><div class="vl" style="left:515.90px;height:467.0px"></div>
<div class="row" style="top:0.0px"><span class="c" style="left:1.30px">Categoria RC 01</span><div class="tri" style="left:144.65px;top:0.4px"></div><span class="c" style="left:148.65px">R$</span><span class="c r" style="left:154.65px;width:81.70px">246.518,00</span><div class="tri" style="left:240.15px;top:0.4px"></div><span class="c" style="left:244.15px">R$</span><span class="c r" style="left:250.15px;width:80.90px">127.868,00</span><span class="c r" style="left:339.65px;width:80.60px">-118.650,00</span><div class="trk" style="left:423.40px;top:3.6px;width:90.90px"><div class="fg" style="width:48.20px"></div></div><span class="c" style="left:517.00px;width:48.75px;text-align:center">52%</span></div>
<div class="row" style="top:15.5px"><span class="c" style="left:1.30px">Categoria RC 02</span><div class="tri" style="left:144.65px;top:0.4px"></div><span class="c" style="left:148.65px">R$</span><span class="c r" style="left:154.65px;width:81.70px">207.742,00</span><div class="tri" style="left:240.15px;top:0.4px"></div><span class="c" style="left:244.15px">R$</span><span class="c r" style="left:250.15px;width:80.90px">106.234,00</span><span class="c r" style="left:339.65px;width:80.60px">-101.508,00</span><div class="trk" style="left:423.40px;top:3.6px;width:90.90px"><div class="fg" style="width:47.50px"></div></div><span class="c" style="left:517.00px;width:48.75px;text-align:center">51%</span></div>
<div class="row" style="top:31.0px"><span class="c" style="left:1.30px">Categoria RC 03</span><div class="tri" style="left:144.65px;top:0.4px"></div><span class="c" style="left:148.65px">R$</span><span class="c r" style="left:154.65px;width:81.70px">183.144,00</span><div class="tri" style="left:240.15px;top:0.4px"></div><span class="c" style="left:244.15px">R$</span><span class="c r" style="left:250.15px;width:80.90px">103.167,00</span><span class="c r" style="left:339.65px;width:80.60px">-79.977,00</span><div class="trk" style="left:423.40px;top:3.6px;width:90.90px"><div class="fg" style="width:52.42px"></div></div><span class="c" style="left:517.00px;width:48.75px;text-align:center">56%</span></div>
<div class="row" style="top:46.5px"><span class="c" style="left:1.30px">Categoria RC 04</span><div class="tri" style="left:144.65px;top:0.4px"></div><span class="c" style="left:148.65px">R$</span><span class="c r" style="left:154.65px;width:81.70px">151.597,00</span><div class="tri" style="left:240.15px;top:0.4px"></div><span class="c" style="left:244.15px">R$</span><span class="c r" style="left:250.15px;width:80.90px">136.479,00</span><span class="c r" style="left:339.65px;width:80.60px">-15.118,00</span><div class="trk" style="left:423.40px;top:3.6px;width:90.90px"><div class="fg" style="width:84.35px"></div></div><span class="c" style="left:517.00px;width:48.75px;text-align:center">90%</span></div>
<div class="row" style="top:62.0px"><span class="c" style="left:1.30px">Categoria RC 05</span><div class="tri" style="left:144.65px;top:0.4px"></div><span class="c" style="left:148.65px">R$</span><span class="c r" style="left:154.65px;width:81.70px">203.321,00</span><div class="tri" style="left:240.15px;top:0.4px"></div><span class="c" style="left:244.15px">R$</span><span class="c r" style="left:250.15px;width:80.90px">132.457,00</span><span class="c r" style="left:339.65px;width:80.60px">-70.864,00</span><div class="trk" style="left:423.40px;top:3.6px;width:90.90px"><div class="fg" style="width:60.78px"></div></div><span class="c" style="left:517.00px;width:48.75px;text-align:center">65%</span></div>
<div class="row" style="top:77.5px"><span class="c" style="left:1.30px">Categoria RC 06</span><div class="tri" style="left:144.65px;top:0.4px"></div><span class="c" style="left:148.65px">R$</span><span class="c r" style="left:154.65px;width:81.70px">245.675,00</span><div class="tri" style="left:240.15px;top:0.4px"></div><span class="c" style="left:244.15px">R$</span><span class="c r" style="left:250.15px;width:80.90px">108.657,00</span><span class="c r" style="left:339.65px;width:80.60px">-137.018,00</span><div class="trk" style="left:423.40px;top:3.6px;width:90.90px"><div class="fg" style="width:40.96px"></div></div><span class="c" style="left:517.00px;width:48.75px;text-align:center">44%</span></div>
<div class="row" style="top:93.0px"><span class="c" style="left:1.30px">Categoria RC 07</span><div class="tri" style="left:144.65px;top:0.4px"></div><span class="c" style="left:148.65px">R$</span><span class="c r" style="left:154.65px;width:81.70px">210.384,00</span><div class="tri" style="left:240.15px;top:0.4px"></div><span class="c" style="left:244.15px">R$</span><span class="c r" style="left:250.15px;width:80.90px">126.386,00</span><span class="c r" style="left:339.65px;width:80.60px">-83.998,00</span><div class="trk" style="left:423.40px;top:3.6px;width:90.90px"><div class="fg" style="width:55.97px"></div></div><span class="c" style="left:517.00px;width:48.75px;text-align:center">60%</span></div>
<div class="row" style="top:108.5px"><span class="c" style="left:1.30px">Categoria RC 08</span><div class="tri" style="left:144.65px;top:0.4px"></div><span class="c" style="left:148.65px">R$</span><span class="c r" style="left:154.65px;width:81.70px">236.869,00</span><div class="tri" style="left:240.15px;top:0.4px"></div><span class="c" style="left:244.15px">R$</span><span class="c r" style="left:250.15px;width:80.90px">139.363,00</span><span class="c r" style="left:339.65px;width:80.60px">-97.506,00</span><div class="trk" style="left:423.40px;top:3.6px;width:90.90px"><div class="fg" style="width:54.80px"></div></div><span class="c" style="left:517.00px;width:48.75px;text-align:center">59%</span></div>
<div class="row" style="top:124.0px"><span class="c" style="left:1.30px">Categoria RC 09</span><div class="tri" style="left:144.65px;top:0.4px"></div><span class="c" style="left:148.65px">R$</span><span class="c r" style="left:154.65px;width:81.70px">176.868,00</span><div class="tri" style="left:240.15px;top:0.4px"></div><span class="c" style="left:244.15px">R$</span><span class="c r" style="left:250.15px;width:80.90px">133.885,00</span><span class="c r" style="left:339.65px;width:80.60px">-42.983,00</span><div class="trk" style="left:423.40px;top:3.6px;width:90.90px"><div class="fg" style="width:70.77px"></div></div><span class="c" style="left:517.00px;width:48.75px;text-align:center">76%</span></div>
<div class="row" style="top:139.5px"><span class="c" style="left:1.30px">Categoria RC 10</span><div class="tri" style="left:144.65px;top:0.4px"></div><span class="c" style="left:148.65px">R$</span><span class="c r" style="left:154.65px;width:81.70px">185.334,00</span><div class="tri" style="left:240.15px;top:0.4px"></div><span class="c" style="left:244.15px">R$</span><span class="c r" style="left:250.15px;width:80.90px">139.076,00</span><span class="c r" style="left:339.65px;width:80.60px">-46.258,00</span><div class="trk" style="left:423.40px;top:3.6px;width:90.90px"><div class="fg" style="width:70.15px"></div></div><span class="c" style="left:517.00px;width:48.75px;text-align:center">75%</span></div>
<div class="row" style="top:155.0px"><span class="c" style="left:1.30px">Categoria RC 11</span><div class="tri" style="left:144.65px;top:0.4px"></div><span class="c" style="left:148.65px">R$</span><span class="c r" style="left:154.65px;width:81.70px">177.899,00</span><div class="tri" style="left:240.15px;top:0.4px"></div><span class="c" style="left:244.15px">R$</span><span class="c r" style="left:250.15px;width:80.90px">117.428,00</span><span class="c r" style="left:339.65px;width:80.60px">-60.471,00</span><div class="trk" style="left:423.40px;top:3.6px;width:90.90px"><div class="fg" style="width:61.59px"></div></div><span class="c" style="left:517.00px;width:48.75px;text-align:center">66%</span></div>
<div class="row" style="top:170.5px"><span class="c" style="left:1.30px">Categoria RC 12</span><div class="tri" style="left:144.65px;top:0.4px"></div><span class="c" style="left:148.65px">R$</span><span class="c r" style="left:154.65px;width:81.70px">166.930,00</span><div class="tri" style="left:240.15px;top:0.4px"></div><span class="c" style="left:244.15px">R$</span><span class="c r" style="left:250.15px;width:80.90px">112.946,00</span><span class="c r" style="left:339.65px;width:80.60px">-53.984,00</span><div class="trk" style="left:423.40px;top:3.6px;width:90.90px"><div class="fg" style="width:63.16px"></div></div><span class="c" style="left:517.00px;width:48.75px;text-align:center">68%</span></div>
<div class="row" style="top:186.0px"><span class="c" style="left:1.30px">Categoria RC 13</span><div class="tri" style="left:144.65px;top:0.4px"></div><span class="c" style="left:148.65px">R$</span><span class="c r" style="left:154.65px;width:81.70px">186.677,00</span><div class="tri" style="left:240.15px;top:0.4px"></div><span class="c" style="left:244.15px">R$</span><span class="c r" style="left:250.15px;width:80.90px">113.325,00</span><span class="c r" style="left:339.65px;width:80.60px">-73.352,00</span><div class="trk" style="left:423.40px;top:3.6px;width:90.90px"><div class="fg" style="width:56.57px"></div></div><span class="c" style="left:517.00px;width:48.75px;text-align:center">61%</span></div>
<div class="row" style="top:201.5px"><span class="c" style="left:1.30px">Categoria RC 14</span><div class="tri" style="left:144.65px;top:0.4px"></div><span class="c" style="left:148.65px">R$</span><span class="c r" style="left:154.65px;width:81.70px">174.029,00</span><div class="tri" style="left:240.15px;top:0.4px"></div><span class="c" style="left:244.15px">R$</span><span class="c r" style="left:250.15px;width:80.90px">104.310,00</span><span class="c r" style="left:339.65px;width:80.60px">-69.719,00</span><div class="trk" style="left:423.40px;top:3.6px;width:90.90px"><div class="fg" style="width:55.84px"></div></div><span class="c" style="left:517.00px;width:48.75px;text-align:center">60%</span></div>
<div class="row" style="top:217.0px"><span class="c" style="left:1.30px">Categoria RC 15</span><div class="tri" style="left:144.65px;top:0.4px"></div><span class="c" style="left:148.65px">R$</span><span class="c r" style="left:154.65px;width:81.70px">169.062,00</span><div class="tri" style="left:240.15px;top:0.4px"></div><span class="c" style="left:244.15px">R$</span><span class="c r" style="left:250.15px;width:80.90px">132.439,00</span><span class="c r" style="left:339.65px;width:80.60px">-36.623,00</span><div class="trk" style="left:423.40px;top:3.6px;width:90.90px"><div class="fg" style="width:73.27px"></div></div><span class="c" style="left:517.00px;width:48.75px;text-align:center">78%</span></div>
<div class="row" style="top:232.5px"><span class="c" style="left:1.30px">Categoria RC 16</span><div class="tri" style="left:144.65px;top:0.4px"></div><span class="c" style="left:148.65px">R$</span><span class="c r" style="left:154.65px;width:81.70px">191.234,00</span><div class="tri" style="left:240.15px;top:0.4px"></div><span class="c" style="left:244.15px">R$</span><span class="c r" style="left:250.15px;width:80.90px">129.947,00</span><span class="c r" style="left:339.65px;width:80.60px">-61.287,00</span><div class="trk" style="left:423.40px;top:3.6px;width:90.90px"><div class="fg" style="width:63.43px"></div></div><span class="c" style="left:517.00px;width:48.75px;text-align:center">68%</span></div>
<div class="row" style="top:248.0px"><span class="c" style="left:1.30px">Categoria RC 17</span><div class="tri" style="left:144.65px;top:0.4px"></div><span class="c" style="left:148.65px">R$</span><span class="c r" style="left:154.65px;width:81.70px">231.775,00</span><div class="tri" style="left:240.15px;top:0.4px"></div><span class="c" style="left:244.15px">R$</span><span class="c r" style="left:250.15px;width:80.90px">101.880,00</span><span class="c r" style="left:339.65px;width:80.60px">-129.895,00</span><div class="trk" style="left:423.40px;top:3.6px;width:90.90px"><div class="fg" style="width:40.70px"></div></div><span class="c" style="left:517.00px;width:48.75px;text-align:center">44%</span></div>
<div class="row" style="top:263.5px"><span class="c" style="left:1.30px">Categoria RC 18</span><div class="tri" style="left:144.65px;top:0.4px"></div><span class="c" style="left:148.65px">R$</span><span class="c r" style="left:154.65px;width:81.70px">172.842,00</span><div class="tri" style="left:240.15px;top:0.4px"></div><span class="c" style="left:244.15px">R$</span><span class="c r" style="left:250.15px;width:80.90px">134.293,00</span><span class="c r" style="left:339.65px;width:80.60px">-38.549,00</span><div class="trk" style="left:423.40px;top:3.6px;width:90.90px"><div class="fg" style="width:72.67px"></div></div><span class="c" style="left:517.00px;width:48.75px;text-align:center">78%</span></div>
<div class="row" style="top:279.0px"><span class="c" style="left:1.30px">Categoria RC 19</span><div class="tri" style="left:144.65px;top:0.4px"></div><span class="c" style="left:148.65px">R$</span><span class="c r" style="left:154.65px;width:81.70px">211.216,00</span><div class="tri" style="left:240.15px;top:0.4px"></div><span class="c" style="left:244.15px">R$</span><span class="c r" style="left:250.15px;width:80.90px">139.151,00</span><span class="c r" style="left:339.65px;width:80.60px">-72.065,00</span><div class="trk" style="left:423.40px;top:3.6px;width:90.90px"><div class="fg" style="width:61.47px"></div></div><span class="c" style="left:517.00px;width:48.75px;text-align:center">66%</span></div>
<div class="row" style="top:294.5px"><span class="c" style="left:1.30px">Categoria RC 20</span><div class="tri" style="left:144.65px;top:0.4px"></div><span class="c" style="left:148.65px">R$</span><span class="c r" style="left:154.65px;width:81.70px">208.649,00</span><div class="tri" style="left:240.15px;top:0.4px"></div><span class="c" style="left:244.15px">R$</span><span class="c r" style="left:250.15px;width:80.90px">137.128,00</span><span class="c r" style="left:339.65px;width:80.60px">-71.521,00</span><div class="trk" style="left:423.40px;top:3.6px;width:90.90px"><div class="fg" style="width:61.32px"></div></div><span class="c" style="left:517.00px;width:48.75px;text-align:center">66%</span></div>
<div class="row" style="top:310.0px"><span class="c" style="left:1.30px">Categoria RC 21</span><div class="tri" style="left:144.65px;top:0.4px"></div><span class="c" style="left:148.65px">R$</span><span class="c r" style="left:154.65px;width:81.70px">212.697,00</span><div class="tri" style="left:240.15px;top:0.4px"></div><span class="c" style="left:244.15px">R$</span><span class="c r" style="left:250.15px;width:80.90px">115.105,00</span><span class="c r" style="left:339.65px;width:80.60px">-97.592,00</span><div class="trk" style="left:423.40px;top:3.6px;width:90.90px"><div class="fg" style="width:50.33px"></div></div><span class="c" style="left:517.00px;width:48.75px;text-align:center">54%</span></div>
<div class="row" style="top:325.5px"><span class="c" style="left:1.30px">Categoria RC 22</span><div class="tri" style="left:144.65px;top:0.4px"></div><span class="c" style="left:148.65px">R$</span><span class="c r" style="left:154.65px;width:81.70px">178.162,00</span><div class="tri" style="left:240.15px;top:0.4px"></div><span class="c" style="left:244.15px">R$</span><span class="c r" style="left:250.15px;width:80.90px">100.683,00</span><span class="c r" style="left:339.65px;width:80.60px">-77.479,00</span><div class="trk" style="left:423.40px;top:3.6px;width:90.90px"><div class="fg" style="width:52.60px"></div></div><span class="c" style="left:517.00px;width:48.75px;text-align:center">57%</span></div>
<div class="row" style="top:341.0px"><span class="c" style="left:1.30px">Categoria RC 23</span><div class="tri" style="left:144.65px;top:0.4px"></div><span class="c" style="left:148.65px">R$</span><span class="c r" style="left:154.65px;width:81.70px">200.552,00</span><div class="tri" style="left:240.15px;top:0.4px"></div><span class="c" style="left:244.15px">R$</span><span class="c r" style="left:250.15px;width:80.90px">123.125,00</span><span class="c r" style="left:339.65px;width:80.60px">-77.427,00</span><div class="trk" style="left:423.40px;top:3.6px;width:90.90px"><div class="fg" style="width:57.22px"></div></div><span class="c" style="left:517.00px;width:48.75px;text-align:center">61%</span></div>
<div class="row" style="top:356.5px"><span class="c" style="left:1.30px">Categoria RC 24</span><div class="tri" style="left:144.65px;top:0.4px"></div><span class="c" style="left:148.65px">R$</span><span class="c r" style="left:154.65px;width:81.70px">179.046,00</span><div class="tri" style="left:240.15px;top:0.4px"></div><span class="c" style="left:244.15px">R$</span><span class="c r" style="left:250.15px;width:80.90px">117.708,00</span><span class="c r" style="left:339.65px;width:80.60px">-61.338,00</span><div class="trk" style="left:423.40px;top:3.6px;width:90.90px"><div class="fg" style="width:61.34px"></div></div><span class="c" style="left:517.00px;width:48.75px;text-align:center">66%</span></div>
<div class="row" style="top:372.0px"><span class="c" style="left:1.30px">Categoria RC 25</span><div class="tri" style="left:144.65px;top:0.4px"></div><span class="c" style="left:148.65px">R$</span><span class="c r" style="left:154.65px;width:81.70px">204.101,00</span><div class="tri" style="left:240.15px;top:0.4px"></div><span class="c" style="left:244.15px">R$</span><span class="c r" style="left:250.15px;width:80.90px">120.388,00</span><span class="c r" style="left:339.65px;width:80.60px">-83.713,00</span><div class="trk" style="left:423.40px;top:3.6px;width:90.90px"><div class="fg" style="width:54.94px"></div></div><span class="c" style="left:517.00px;width:48.75px;text-align:center">59%</span></div>
<div class="row" style="top:387.5px"><div class="trk" style="left:423.40px;top:3.6px;width:90.90px"></div></div>
<div class="row" style="top:403.0px"><div class="trk" style="left:423.40px;top:3.6px;width:90.90px"></div></div>
<div class="row" style="top:418.5px"><div class="trk" style="left:423.40px;top:3.6px;width:90.90px"></div></div>
<div class="row" style="top:434.0px"><div class="trk" style="left:423.40px;top:3.6px;width:90.90px"></div></div>
<div class="row" style="top:449.5px"><div class="trk" style="left:423.40px;top:3.6px;width:90.90px"></div></div>
</div>
<div style="left:136.6px;top:224.3px;width:565.15px;height:1.7px;background:#b0e191"></div>
<div class="hdr" style="left:714px;top:192.7px;width:49.950000000000045px;height:17px"></div>
<div class="hdr" style="left:714px;top:209.0px;width:564.0px;height:16.0px"></div>
<div class="tbl" style="left:714.25px;top:225.0px;width:563.75px;height:467.0px;overflow:hidden">
<div class="vl" style="left:146.50px;height:467.0px"></div><div class="vl" style="left:239.00px;height:467.0px"></div><div class="vl" style="left:331.50px;height:467.0px"></div><div class="vl" style="left:414.00px;height:467.0px"></div><div class="vl" style="left:513.50px;height:467.0px"></div>
<div class="row" style="top:0.0px"><span class="c" style="left:1.60px">Categoria DP 01</span><div class="tri" style="left:147.00px;top:0.4px"></div><span class="c" style="left:151.00px">R$</span><span class="c r" style="left:157.00px;width:78.70px">176.265,00</span><div class="tri" style="left:239.50px;top:0.4px"></div><span class="c" style="left:243.50px">R$</span><span class="c r" style="left:249.50px;width:78.90px">135.854,00</span><span class="c r" style="left:337.00px;width:76.10px">-40.411,00</span><div class="trk" style="left:416.05px;top:3.6px;width:94.80px"><div class="fr" style="width:75.14px"></div></div><span class="c" style="left:514.60px;width:49.75px;text-align:center">77%</span></div>
<div class="row" style="top:15.5px"><span class="c" style="left:1.60px">Categoria DP 02</span><div class="tri" style="left:147.00px;top:0.4px"></div><span class="c" style="left:151.00px">R$</span><span class="c r" style="left:157.00px;width:78.70px">212.051,00</span><div class="tri" style="left:239.50px;top:0.4px"></div><span class="c" style="left:243.50px">R$</span><span class="c r" style="left:249.50px;width:78.90px">121.999,00</span><span class="c r" style="left:337.00px;width:76.10px">-90.052,00</span><div class="trk" style="left:416.05px;top:3.6px;width:94.80px"><div class="fr" style="width:55.70px"></div></div><span class="c" style="left:514.60px;width:49.75px;text-align:center">58%</span></div>
<div class="row" style="top:31.0px"><span class="c" style="left:1.60px">Categoria DP 03</span><div class="tri" style="left:147.00px;top:0.4px"></div><span class="c" style="left:151.00px">R$</span><span class="c r" style="left:157.00px;width:78.70px">176.723,00</span><div class="tri" style="left:239.50px;top:0.4px"></div><span class="c" style="left:243.50px">R$</span><span class="c r" style="left:249.50px;width:78.90px">131.558,00</span><span class="c r" style="left:337.00px;width:76.10px">-45.165,00</span><div class="trk" style="left:416.05px;top:3.6px;width:94.80px"><div class="fr" style="width:72.52px"></div></div><span class="c" style="left:514.60px;width:49.75px;text-align:center">74%</span></div>
<div class="row" style="top:46.5px"><span class="c" style="left:1.60px">Categoria DP 04</span><div class="tri" style="left:147.00px;top:0.4px"></div><span class="c" style="left:151.00px">R$</span><span class="c r" style="left:157.00px;width:78.70px">220.916,00</span><div class="tri" style="left:239.50px;top:0.4px"></div><span class="c" style="left:243.50px">R$</span><span class="c r" style="left:249.50px;width:78.90px">106.029,00</span><span class="c r" style="left:337.00px;width:76.10px">-114.887,00</span><div class="trk" style="left:416.05px;top:3.6px;width:94.80px"><div class="fr" style="width:46.21px"></div></div><span class="c" style="left:514.60px;width:49.75px;text-align:center">48%</span></div>
<div class="row" style="top:62.0px"><span class="c" style="left:1.60px">Categoria DP 05</span><div class="tri" style="left:147.00px;top:0.4px"></div><span class="c" style="left:151.00px">R$</span><span class="c r" style="left:157.00px;width:78.70px">217.236,00</span><div class="tri" style="left:239.50px;top:0.4px"></div><span class="c" style="left:243.50px">R$</span><span class="c r" style="left:249.50px;width:78.90px">129.903,00</span><span class="c r" style="left:337.00px;width:76.10px">-87.333,00</span><div class="trk" style="left:416.05px;top:3.6px;width:94.80px"><div class="fr" style="width:57.95px"></div></div><span class="c" style="left:514.60px;width:49.75px;text-align:center">60%</span></div>
<div class="row" style="top:77.5px"><span class="c" style="left:1.60px">Categoria DP 06</span><div class="tri" style="left:147.00px;top:0.4px"></div><span class="c" style="left:151.00px">R$</span><span class="c r" style="left:157.00px;width:78.70px">165.269,00</span><div class="tri" style="left:239.50px;top:0.4px"></div><span class="c" style="left:243.50px">R$</span><span class="c r" style="left:249.50px;width:78.90px">104.750,00</span><span class="c r" style="left:337.00px;width:76.10px">-60.519,00</span><div class="trk" style="left:416.05px;top:3.6px;width:94.80px"><div class="fr" style="width:61.51px"></div></div><span class="c" style="left:514.60px;width:49.75px;text-align:center">63%</span></div>
<div class="row" style="top:93.0px"><span class="c" style="left:1.60px">Categoria DP 07</span><div class="tri" style="left:147.00px;top:0.4px"></div><span class="c" style="left:151.00px">R$</span><span class="c r" style="left:157.00px;width:78.70px">185.796,00</span><div class="tri" style="left:239.50px;top:0.4px"></div><span class="c" style="left:243.50px">R$</span><span class="c r" style="left:249.50px;width:78.90px">107.739,00</span><span class="c r" style="left:337.00px;width:76.10px">-78.057,00</span><div class="trk" style="left:416.05px;top:3.6px;width:94.80px"><div class="fr" style="width:56.15px"></div></div><span class="c" style="left:514.60px;width:49.75px;text-align:center">58%</span></div>
<div class="row" style="top:108.5px"><span class="c" style="left:1.60px">Categoria DP 08</span><div class="tri" style="left:147.00px;top:0.4px"></div><span class="c" style="left:151.00px">R$</span><span class="c r" style="left:157.00px;width:78.70px">152.312,00</span><div class="tri" style="left:239.50px;top:0.4px"></div><span class="c" style="left:243.50px">R$</span><span class="c r" style="left:249.50px;width:78.90px">127.749,00</span><span class="c r" style="left:337.00px;width:76.10px">-24.563,00</span><div class="trk" style="left:416.05px;top:3.6px;width:94.80px"><div class="fr" style="width:81.90px"></div></div><span class="c" style="left:514.60px;width:49.75px;text-align:center">84%</span></div>
<div class="row" style="top:124.0px"><span class="c" style="left:1.60px">Categoria DP 09</span><div class="tri" style="left:147.00px;top:0.4px"></div><span class="c" style="left:151.00px">R$</span><span class="c r" style="left:157.00px;width:78.70px">178.500,00</span><div class="tri" style="left:239.50px;top:0.4px"></div><span class="c" style="left:243.50px">R$</span><span class="c r" style="left:249.50px;width:78.90px">112.576,00</span><span class="c r" style="left:337.00px;width:76.10px">-65.924,00</span><div class="trk" style="left:416.05px;top:3.6px;width:94.80px"><div class="fr" style="width:61.20px"></div></div><span class="c" style="left:514.60px;width:49.75px;text-align:center">63%</span></div>
<div class="row" style="top:139.5px"><span class="c" style="left:1.60px">Categoria DP 10</span><div class="tri" style="left:147.00px;top:0.4px"></div><span class="c" style="left:151.00px">R$</span><span class="c r" style="left:157.00px;width:78.70px">234.563,00</span><div class="tri" style="left:239.50px;top:0.4px"></div><span class="c" style="left:243.50px">R$</span><span class="c r" style="left:249.50px;width:78.90px">137.828,00</span><span class="c r" style="left:337.00px;width:76.10px">-96.735,00</span><div class="trk" style="left:416.05px;top:3.6px;width:94.80px"><div class="fr" style="width:56.92px"></div></div><span class="c" style="left:514.60px;width:49.75px;text-align:center">59%</span></div>
<div class="row" style="top:155.0px"><span class="c" style="left:1.60px">Categoria DP 11</span><div class="tri" style="left:147.00px;top:0.4px"></div><span class="c" style="left:151.00px">R$</span><span class="c r" style="left:157.00px;width:78.70px">180.244,00</span><div class="tri" style="left:239.50px;top:0.4px"></div><span class="c" style="left:243.50px">R$</span><span class="c r" style="left:249.50px;width:78.90px">105.554,00</span><span class="c r" style="left:337.00px;width:76.10px">-74.690,00</span><div class="trk" style="left:416.05px;top:3.6px;width:94.80px"><div class="fr" style="width:56.72px"></div></div><span class="c" style="left:514.60px;width:49.75px;text-align:center">59%</span></div>
<div class="row" style="top:170.5px"><span class="c" style="left:1.60px">Categoria DP 12</span><div class="tri" style="left:147.00px;top:0.4px"></div><span class="c" style="left:151.00px">R$</span><span class="c r" style="left:157.00px;width:78.70px">200.327,00</span><div class="tri" style="left:239.50px;top:0.4px"></div><span class="c" style="left:243.50px">R$</span><span class="c r" style="left:249.50px;width:78.90px">126.785,00</span><span class="c r" style="left:337.00px;width:76.10px">-73.542,00</span><div class="trk" style="left:416.05px;top:3.6px;width:94.80px"><div class="fr" style="width:61.42px"></div></div><span class="c" style="left:514.60px;width:49.75px;text-align:center">63%</span></div>
<div class="row" style="top:186.0px"><span class="c" style="left:1.60px">Categoria DP 13</span><div class="tri" style="left:147.00px;top:0.4px"></div><span class="c" style="left:151.00px">R$</span><span class="c r" style="left:157.00px;width:78.70px">191.900,00</span><div class="tri" style="left:239.50px;top:0.4px"></div><span class="c" style="left:243.50px">R$</span><span class="c r" style="left:249.50px;width:78.90px">109.953,00</span><span class="c r" style="left:337.00px;width:76.10px">-81.947,00</span><div class="trk" style="left:416.05px;top:3.6px;width:94.80px"><div class="fr" style="width:55.46px"></div></div><span class="c" style="left:514.60px;width:49.75px;text-align:center">57%</span></div>
<div class="row" style="top:201.5px"><span class="c" style="left:1.60px">Categoria DP 14</span><div class="tri" style="left:147.00px;top:0.4px"></div><span class="c" style="left:151.00px">R$</span><span class="c r" style="left:157.00px;width:78.70px">217.589,00</span><div class="tri" style="left:239.50px;top:0.4px"></div><span class="c" style="left:243.50px">R$</span><span class="c r" style="left:249.50px;width:78.90px">112.792,00</span><span class="c r" style="left:337.00px;width:76.10px">-104.797,00</span><div class="trk" style="left:416.05px;top:3.6px;width:94.80px"><div class="fr" style="width:50.03px"></div></div><span class="c" style="left:514.60px;width:49.75px;text-align:center">52%</span></div>
<div class="row" style="top:217.0px"><span class="c" style="left:1.60px">Categoria DP 15</span><div class="tri" style="left:147.00px;top:0.4px"></div><span class="c" style="left:151.00px">R$</span><span class="c r" style="left:157.00px;width:78.70px">168.530,00</span><div class="tri" style="left:239.50px;top:0.4px"></div><span class="c" style="left:243.50px">R$</span><span class="c r" style="left:249.50px;width:78.90px">129.092,00</span><span class="c r" style="left:337.00px;width:76.10px">-39.438,00</span><div class="trk" style="left:416.05px;top:3.6px;width:94.80px"><div class="fr" style="width:74.67px"></div></div><span class="c" style="left:514.60px;width:49.75px;text-align:center">77%</span></div>
<div class="row" style="top:232.5px"><span class="c" style="left:1.60px">Categoria DP 16</span><div class="tri" style="left:147.00px;top:0.4px"></div><span class="c" style="left:151.00px">R$</span><span class="c r" style="left:157.00px;width:78.70px">226.734,00</span><div class="tri" style="left:239.50px;top:0.4px"></div><span class="c" style="left:243.50px">R$</span><span class="c r" style="left:249.50px;width:78.90px">103.767,00</span><span class="c r" style="left:337.00px;width:76.10px">-122.967,00</span><div class="trk" style="left:416.05px;top:3.6px;width:94.80px"><div class="fr" style="width:43.99px"></div></div><span class="c" style="left:514.60px;width:49.75px;text-align:center">46%</span></div>
<div class="row" style="top:248.0px"><span class="c" style="left:1.60px">Categoria DP 17</span><div class="tri" style="left:147.00px;top:0.4px"></div><span class="c" style="left:151.00px">R$</span><span class="c r" style="left:157.00px;width:78.70px">214.794,00</span><div class="tri" style="left:239.50px;top:0.4px"></div><span class="c" style="left:243.50px">R$</span><span class="c r" style="left:249.50px;width:78.90px">112.903,00</span><span class="c r" style="left:337.00px;width:76.10px">-101.891,00</span><div class="trk" style="left:416.05px;top:3.6px;width:94.80px"><div class="fr" style="width:50.75px"></div></div><span class="c" style="left:514.60px;width:49.75px;text-align:center">53%</span></div>
<div class="row" style="top:263.5px"><span class="c" style="left:1.60px">Categoria DP 18</span><div class="tri" style="left:147.00px;top:0.4px"></div><span class="c" style="left:151.00px">R$</span><span class="c r" style="left:157.00px;width:78.70px">215.255,00</span><div class="tri" style="left:239.50px;top:0.4px"></div><span class="c" style="left:243.50px">R$</span><span class="c r" style="left:249.50px;width:78.90px">114.906,00</span><span class="c r" style="left:337.00px;width:76.10px">-100.349,00</span><div class="trk" style="left:416.05px;top:3.6px;width:94.80px"><div class="fr" style="width:51.56px"></div></div><span class="c" style="left:514.60px;width:49.75px;text-align:center">53%</span></div>
<div class="row" style="top:279.0px"><span class="c" style="left:1.60px">Categoria DP 19</span><div class="tri" style="left:147.00px;top:0.4px"></div><span class="c" style="left:151.00px">R$</span><span class="c r" style="left:157.00px;width:78.70px">174.615,00</span><div class="tri" style="left:239.50px;top:0.4px"></div><span class="c" style="left:243.50px">R$</span><span class="c r" style="left:249.50px;width:78.90px">121.539,00</span><span class="c r" style="left:337.00px;width:76.10px">-53.076,00</span><div class="trk" style="left:416.05px;top:3.6px;width:94.80px"><div class="fr" style="width:67.71px"></div></div><span class="c" style="left:514.60px;width:49.75px;text-align:center">70%</span></div>
<div class="row" style="top:294.5px"><span class="c" style="left:1.60px">Categoria DP 20</span><div class="tri" style="left:147.00px;top:0.4px"></div><span class="c" style="left:151.00px">R$</span><span class="c r" style="left:157.00px;width:78.70px">162.341,00</span><div class="tri" style="left:239.50px;top:0.4px"></div><span class="c" style="left:243.50px">R$</span><span class="c r" style="left:249.50px;width:78.90px">129.604,00</span><span class="c r" style="left:337.00px;width:76.10px">-32.737,00</span><div class="trk" style="left:416.05px;top:3.6px;width:94.80px"><div class="fr" style="width:77.89px"></div></div><span class="c" style="left:514.60px;width:49.75px;text-align:center">80%</span></div>
<div class="row" style="top:310.0px"><span class="c" style="left:1.60px">Categoria DP 21</span><div class="tri" style="left:147.00px;top:0.4px"></div><span class="c" style="left:151.00px">R$</span><span class="c r" style="left:157.00px;width:78.70px">191.113,00</span><div class="tri" style="left:239.50px;top:0.4px"></div><span class="c" style="left:243.50px">R$</span><span class="c r" style="left:249.50px;width:78.90px">134.477,00</span><span class="c r" style="left:337.00px;width:76.10px">-56.636,00</span><div class="trk" style="left:416.05px;top:3.6px;width:94.80px"><div class="fr" style="width:68.46px"></div></div><span class="c" style="left:514.60px;width:49.75px;text-align:center">70%</span></div>
<div class="row" style="top:325.5px"><span class="c" style="left:1.60px">Categoria DP 22</span><div class="tri" style="left:147.00px;top:0.4px"></div><span class="c" style="left:151.00px">R$</span><span class="c r" style="left:157.00px;width:78.70px">215.036,00</span><div class="tri" style="left:239.50px;top:0.4px"></div><span class="c" style="left:243.50px">R$</span><span class="c r" style="left:249.50px;width:78.90px">100.543,00</span><span class="c r" style="left:337.00px;width:76.10px">-114.493,00</span><div class="trk" style="left:416.05px;top:3.6px;width:94.80px"><div class="fr" style="width:44.97px"></div></div><span class="c" style="left:514.60px;width:49.75px;text-align:center">47%</span></div>
<div class="row" style="top:341.0px"><span class="c" style="left:1.60px">Categoria DP 23</span><div class="tri" style="left:147.00px;top:0.4px"></div><span class="c" style="left:151.00px">R$</span><span class="c r" style="left:157.00px;width:78.70px">243.552,00</span><div class="tri" style="left:239.50px;top:0.4px"></div><span class="c" style="left:243.50px">R$</span><span class="c r" style="left:249.50px;width:78.90px">116.894,00</span><span class="c r" style="left:337.00px;width:76.10px">-126.658,00</span><div class="trk" style="left:416.05px;top:3.6px;width:94.80px"><div class="fr" style="width:46.21px"></div></div><span class="c" style="left:514.60px;width:49.75px;text-align:center">48%</span></div>
<div class="row" style="top:356.5px"><span class="c" style="left:1.60px">Categoria DP 24</span><div class="tri" style="left:147.00px;top:0.4px"></div><span class="c" style="left:151.00px">R$</span><span class="c r" style="left:157.00px;width:78.70px">218.341,00</span><div class="tri" style="left:239.50px;top:0.4px"></div><span class="c" style="left:243.50px">R$</span><span class="c r" style="left:249.50px;width:78.90px">120.068,00</span><span class="c r" style="left:337.00px;width:76.10px">-98.273,00</span><div class="trk" style="left:416.05px;top:3.6px;width:94.80px"><div class="fr" style="width:53.17px"></div></div><span class="c" style="left:514.60px;width:49.75px;text-align:center">55%</span></div>
<div class="row" style="top:372.0px"><span class="c" style="left:1.60px">Categoria DP 25</span><div class="tri" style="left:147.00px;top:0.4px"></div><span class="c" style="left:151.00px">R$</span><span class="c r" style="left:157.00px;width:78.70px">232.645,00</span><div class="tri" style="left:239.50px;top:0.4px"></div><span class="c" style="left:243.50px">R$</span><span class="c r" style="left:249.50px;width:78.90px">112.344,00</span><span class="c r" style="left:337.00px;width:76.10px">-120.301,00</span><div class="trk" style="left:416.05px;top:3.6px;width:94.80px"><div class="fr" style="width:46.50px"></div></div><span class="c" style="left:514.60px;width:49.75px;text-align:center">48%</span></div>
<div class="row" style="top:387.5px"><div class="trk" style="left:416.05px;top:3.6px;width:94.80px"></div></div>
<div class="row" style="top:403.0px"><div class="trk" style="left:416.05px;top:3.6px;width:94.80px"></div></div>
<div class="row" style="top:418.5px"><div class="trk" style="left:416.05px;top:3.6px;width:94.80px"></div></div>
<div class="row" style="top:434.0px"><div class="trk" style="left:416.05px;top:3.6px;width:94.80px"></div></div>
<div class="row" style="top:449.5px"><div class="trk" style="left:416.05px;top:3.6px;width:94.80px"></div></div>
</div>
<div style="left:714.25px;top:224.3px;width:563.75px;height:1.7px;background:#f5a094"></div>
<div id="sheettabs"></div>
<div id="status"></div>
<svg style="left:0px;top:696.4px;width:4px;height:7px" viewBox="0 0 4 7"><path d="M3.2 0.8L0.7 3.5L3.2 6.2" fill="none" stroke="#b4b4b4" stroke-width="0.8"/></svg>
<svg style="left:16.5px;top:696.4px;width:4px;height:7px" viewBox="0 0 4 7"><path d="M0.8 0.8L3.3 3.5L0.8 6.2" fill="none" stroke="#b4b4b4" stroke-width="0.8"/></svg>
<div style="left:138.5px;top:692px;width:63.5px;height:14.5px;background:#fff;border-radius:0 0 2px 2px"></div>
<div style="left:143px;top:703.6px;width:54.5px;height:1.1px;background:#107c41"></div>
<div style="left:78.0px;top:695.5px;width:1px;height:8.5px;background:#dadada"></div>
<div style="left:261.0px;top:695.5px;width:1px;height:8.5px;background:#dadada"></div>
<div style="left:318.0px;top:695.5px;width:1px;height:8.5px;background:#dadada"></div>
<div style="left:789.5px;top:692px;width:490.5px;height:15.5px;background:#f6f6f6"></div>
<svg style="left:780.5px;top:696.5px;width:2px;height:7px" viewBox="0 0 2 7"><circle cx="1" cy="1" r="0.55" fill="#666"/><circle cx="1" cy="3.4" r="0.55" fill="#666"/><circle cx="1" cy="5.8" r="0.55" fill="#666"/></svg>
<svg style="left:791.5px;top:697.5px;width:4px;height:5px" viewBox="0 0 4 5"><path d="M3.6 0.4V4.6L0.5 2.5Z" fill="#555"/></svg>
<div style="left:798.5px;top:697.4px;width:467.5px;height:4.9px;border-radius:2.45px;background:#6e6e6e"></div>
<svg style="left:18.5px;top:710.5px;width:9px;height:8px" viewBox="0 0 9 8"><rect x="0.5" y="0.5" width="8" height="6.6" rx="0.8" fill="none" stroke="#555" stroke-width="0.7"/><path d="M0.5 2.4H8.5" stroke="#555" stroke-width="0.6"/><circle cx="5.4" cy="4.8" r="1.2" fill="none" stroke="#555" stroke-width="0.6"/><path d="M2 4.2V6" stroke="#555" stroke-width="0.6"/></svg>
<svg style="left:35.5px;top:710px;width:8px;height:9px" viewBox="0 0 8 9"><circle cx="3.4" cy="1.2" r="0.9" fill="none" stroke="#444" stroke-width="0.6"/><path d="M0.6 3H6.2 M3.4 3V5.6 M3.4 5.6L1.6 8.4 M3.4 5.6L5 7.4" fill="none" stroke="#444" stroke-width="0.65"/><path d="M5.2 6.4L6.4 7.6L7.6 5.6" fill="none" stroke="#444" stroke-width="0.6"/></svg>
<div style="left:1154.5px;top:708.5px;width:20.5px;height:11.5px;background:#e1e1e1"></div>
<svg style="left:1160.5px;top:710.5px;width:8px;height:7.5px" viewBox="0 0 8 7.5"><rect x="0.5" y="0.5" width="7" height="6.5" fill="none" stroke="#555" stroke-width="0.8"/><path d="M2.9 0.5V7M5.2 0.5V7M0.5 3.8H7.5" stroke="#555" stroke-width="0.7"/></svg>
<svg style="left:1181px;top:710.5px;width:8.5px;height:7.5px" viewBox="0 0 8.5 7.5"><rect x="0.5" y="0.5" width="7.5" height="6.5" rx="0.6" fill="none" stroke="#666" stroke-width="0.7"/><rect x="2.2" y="2" width="4.1" height="5" fill="none" stroke="#666" stroke-width="0.6"/></svg>
<svg style="left:1202px;top:710.5px;width:8.5px;height:7.5px" viewBox="0 0 8.5 7.5"><rect x="0.5" y="0.5" width="7.5" height="6.5" rx="0.6" fill="none" stroke="#555" stroke-width="0.7"/><path d="M2.8 0.5V3.8H5.6V0.5" fill="none" stroke="#555" stroke-width="0.7"/></svg>
<div style="left:1219.5px;top:713.8px;width:4px;height:0.9px;background:#b0b0b0"></div>
<div style="left:1226.5px;top:713.9px;width:53.5px;height:0.8px;background:#8a8a8a"></div>
<div style="left:1251.2px;top:711.2px;width:2.4px;height:6px;background:#555"></div>
<div class="labels">
<span class="t" style="left:10px;top:7.8px;font-size:6.7px;line-height:9px;height:9px;color:#68c094;transform:scaleX(0.8824);">Salvamento Automático</span>
<span class="t" style="left:178.6px;top:8.12px;font-size:6.2px;line-height:9px;height:9px;color:#62c092;transform:scaleX(0.9978);">orçado-realizado.xlsm</span>
<span class="t" style="left:577.5px;top:7.86px;font-size:6.6px;line-height:9px;height:9px;color:#5aa982;transform:scaleX(1.0059);">Pesquisar</span>
<span class="t" style="left:0px;top:29.07px;font-size:6.9px;line-height:9px;height:9px;color:#3a3a3a;transform:scaleX(0.9481);">uivo</span>
<span class="t" style="left:20px;top:29.07px;font-size:6.9px;line-height:9px;height:9px;color:#1a1a1a;-webkit-text-stroke:0.25px #1a1a1a;transform:scaleX(1.0000);">Página Inicial</span>
<span class="t" style="left:71px;top:29.07px;font-size:6.9px;line-height:9px;height:9px;color:#3a3a3a;transform:scaleX(0.9657);">Inserir</span>
<span class="t" style="left:101px;top:29.07px;font-size:6.9px;line-height:9px;height:9px;color:#3a3a3a;transform:scaleX(0.9367);">Desenhar</span>
<span class="t" style="left:140.5px;top:29.07px;font-size:6.9px;line-height:9px;height:9px;color:#3a3a3a;transform:scaleX(0.9601);">Layout da Página</span>
<span class="t" style="left:204px;top:29.07px;font-size:6.9px;line-height:9px;height:9px;color:#3a3a3a;transform:scaleX(0.9402);">Fórmulas</span>
<span class="t" style="left:243px;top:29.07px;font-size:6.9px;line-height:9px;height:9px;color:#3a3a3a;transform:scaleX(0.9537);">Dados</span>
<span class="t" style="left:272px;top:29.07px;font-size:6.9px;line-height:9px;height:9px;color:#3a3a3a;transform:scaleX(0.9235);">Revisão</span>
<span class="t" style="left:305.5px;top:29.07px;font-size:6.9px;line-height:9px;height:9px;color:#3a3a3a;transform:scaleX(0.9574);">Exibir</span>
<span class="t" style="left:333.5px;top:29.07px;font-size:6.9px;line-height:9px;height:9px;color:#3a3a3a;transform:scaleX(0.9792);">Automatizar</span>
<span class="t" style="left:381.5px;top:29.07px;font-size:6.9px;line-height:9px;height:9px;color:#3a3a3a;transform:scaleX(0.9680);">Desenvolvedor</span>
<span class="t" style="left:438px;top:29.07px;font-size:6.9px;line-height:9px;height:9px;color:#3a3a3a;transform:scaleX(0.9645);">Ajuda</span>
<span class="t" style="left:465.5px;top:29.07px;font-size:6.9px;line-height:9px;height:9px;color:#3a3a3a;transform:scaleX(0.9874);">Streamer de Dados</span>
<span class="t" style="left:536px;top:29.07px;font-size:6.9px;line-height:9px;height:9px;color:#3a3a3a;transform:scaleX(0.9656);">Power Pivot</span>
<span class="t" style="left:1110px;top:28.03px;font-size:6.8px;line-height:9px;height:9px;color:#2b2b2b;transform:scaleX(0.9862);">Comentários</span>
<span class="t" style="left:1167px;top:28.03px;font-size:6.8px;line-height:9px;height:9px;color:#ffffff;font-weight:bold;transform:scaleX(0.9326);">Compartilhamento</span>
<span class="t" style="left:1247px;top:28.03px;font-size:6.8px;line-height:9px;height:9px;color:#c9c9c9;transform:scaleX(1.0030);">Atualizar-se</span>
<span class="t" style="left:12.5px;top:82.93px;font-size:6.5px;line-height:9px;height:9px;color:#4a4a4a;transform:scaleX(0.8835);">Área de Transferência</span>
<span class="t" style="left:148px;top:82.93px;font-size:6.5px;line-height:9px;height:9px;color:#4a4a4a;transform:scaleX(0.9624);">Fonte</span>
<span class="t" style="left:293px;top:82.93px;font-size:6.5px;line-height:9px;height:9px;color:#4a4a4a;transform:scaleX(0.9684);">Alinhamento</span>
<span class="t" style="left:437px;top:82.93px;font-size:6.5px;line-height:9px;height:9px;color:#4a4a4a;transform:scaleX(0.9081);">Número</span>
<span class="t" style="left:678.5px;top:82.93px;font-size:6.5px;line-height:9px;height:9px;color:#4a4a4a;transform:scaleX(0.8613);">Estilos</span>
<span class="t" style="left:912px;top:82.93px;font-size:6.5px;line-height:9px;height:9px;color:#4a4a4a;transform:scaleX(0.8761);">Células</span>
<span class="t" style="left:1020px;top:82.93px;font-size:6.5px;line-height:9px;height:9px;color:#4a4a4a;transform:scaleX(0.9057);">Edição</span>
<span class="t" style="left:1102px;top:82.93px;font-size:6.5px;line-height:9px;height:9px;color:#4a4a4a;transform:scaleX(0.9485);">Suplementos</span>
<span class="t" style="left:0px;top:62.63px;font-size:6.8px;line-height:9px;height:9px;color:#b4b4b4;transform:scaleX(0.8000);">Colar</span>
<span class="t" style="left:31px;top:45.13px;font-size:6.8px;line-height:9px;height:9px;color:#333333;transform:scaleX(0.8633);">Recortar</span>
<span class="t" style="left:31px;top:58.43px;font-size:6.8px;line-height:9px;height:9px;color:#333333;transform:scaleX(0.8736);">Copiar</span>
<span class="t" style="left:31px;top:71.73px;font-size:6.8px;line-height:9px;height:9px;color:#333333;transform:scaleX(0.8922);">Pincel de Formatação</span>
<span class="t" style="left:104.5px;top:48.63px;font-size:6.8px;line-height:9px;height:9px;color:#333333;transform:scaleX(0.9084);">Calibri</span>
<span class="t" style="left:168.8px;top:48.63px;font-size:6.8px;line-height:9px;height:9px;color:#333333;letter-spacing:-0.3px;transform:scaleX(0.9585);">11</span>
<span class="t" style="left:106px;top:64.25px;font-size:7.4px;line-height:11px;height:11px;color:#222;font-weight:bold;transform:scaleX(1.0292);">N</span>
<span class="t" style="left:121px;top:64.25px;font-size:7.4px;line-height:11px;height:11px;color:#333;font-style:italic;font-family:"Liberation Serif",serif;transform:scaleX(1.2121);">I</span>
<span class="t" style="left:133.8px;top:63.98px;font-size:7.2px;line-height:11px;height:11px;color:#333;text-decoration:underline;transform:scaleX(0.8339);">S</span>
<span class="t" style="left:193px;top:47.52px;font-size:9px;line-height:12px;height:12px;color:#333;transform:scaleX(1.0805);">A</span>
<span class="t" style="left:207.5px;top:48.72px;font-size:7.6px;line-height:11px;height:11px;color:#333;transform:scaleX(1.0831);">A</span>
<span class="t" style="left:199.8px;top:62.92px;font-size:7.6px;line-height:11px;height:11px;color:#333;transform:scaleX(1.1028);">A</span>
<span class="t" style="left:311.5px;top:48.83px;font-size:6.8px;line-height:9px;height:9px;color:#333333;transform:scaleX(0.9193);">Quebrar Texto Automaticamente</span>
<span class="t" style="left:311.5px;top:65.63px;font-size:6.8px;line-height:9px;height:9px;color:#333333;transform:scaleX(0.8798);">Mesclar e Centralizar</span>
<span class="t" style="left:416px;top:48.63px;font-size:6.8px;line-height:9px;height:9px;color:#333333;transform:scaleX(0.8120);">Geral</span>
<span class="t" style="left:437.6px;top:62.59px;font-size:10.6px;line-height:14px;height:14px;color:#3a3a3a;transform:scaleX(0.8491);">%</span>
<span class="t" style="left:451px;top:65.39px;font-size:5px;line-height:8px;height:8px;color:#777;transform:scaleX(0.9588);">000</span>
<span class="t" style="left:502px;top:62.23px;font-size:6.8px;line-height:9px;height:9px;color:#333333;transform:scaleX(0.8962);">Formatação</span>
<span class="t" style="left:499px;top:70.53px;font-size:6.8px;line-height:9px;height:9px;color:#333333;transform:scaleX(0.9288);">Condicional</span>
<span class="t" style="left:541.5px;top:62.23px;font-size:6.8px;line-height:9px;height:9px;color:#333333;transform:scaleX(0.9223);">Formatar como</span>
<span class="t" style="left:551.5px;top:70.53px;font-size:6.8px;line-height:9px;height:9px;color:#333333;transform:scaleX(0.8986);">Tabela</span>
<span class="t" style="left:591.5px;top:50.08px;font-size:7.2px;line-height:11px;height:11px;color:#1a1a1a;transform:scaleX(1.0142);">Normal</span>
<span class="t" style="left:591.5px;top:64.58px;font-size:7.2px;line-height:11px;height:11px;color:#f4f4f4;font-weight:bold;transform:scaleX(0.9412);">Célula de Ve...</span>
<span class="t" style="left:646.5px;top:50.08px;font-size:7.2px;line-height:11px;height:11px;color:#1b6b2a;transform:scaleX(0.9810);">Bom</span>
<span class="t" style="left:701.5px;top:50.08px;font-size:7.2px;line-height:11px;height:11px;color:#9c6500;transform:scaleX(1.0427);">Neutro</span>
<span class="t" style="left:756px;top:50.08px;font-size:7.2px;line-height:11px;height:11px;color:#a61c28;transform:scaleX(0.9832);">Ruim</span>
<span class="t" style="left:810.8px;top:50.08px;font-size:7.2px;line-height:11px;height:11px;color:#f2861b;font-weight:bold;transform:scaleX(0.8934);">Cálculo</span>
<span class="t" style="left:646px;top:64.58px;font-size:7.2px;line-height:11px;height:11px;color:#f2923c;transform:scaleX(1.0061);">Célula Vincu...</span>
<span class="t" style="left:701.5px;top:64.58px;font-size:7.2px;line-height:11px;height:11px;color:#4a4a6a;transform:scaleX(0.9529);">Entrada</span>
<span class="t" style="left:756px;top:64.58px;font-size:7.2px;line-height:11px;height:11px;color:#2f6fc6;text-decoration:underline;transform:scaleX(1.0547);">Hiperlink</span>
<span class="t" style="left:811px;top:64.58px;font-size:7.2px;line-height:11px;height:11px;color:#9a4f7a;text-decoration:underline;transform:scaleX(1.0259);">Hiperlink Vis...</span>
<span class="t" style="left:888px;top:62.43px;font-size:6.8px;line-height:9px;height:9px;color:#333333;transform:scaleX(0.8364);">Inserir</span>
<span class="t" style="left:910px;top:62.43px;font-size:6.8px;line-height:9px;height:9px;color:#333333;transform:scaleX(0.8331);">Excluir</span>
<span class="t" style="left:932px;top:62.43px;font-size:6.8px;line-height:9px;height:9px;color:#333333;transform:scaleX(0.8703);">Formatar</span>
<span class="t" style="left:978.5px;top:45.13px;font-size:6.8px;line-height:9px;height:9px;color:#333333;transform:scaleX(0.8976);">AutoSoma</span>
<span class="t" style="left:978.5px;top:58.43px;font-size:6.8px;line-height:9px;height:9px;color:#333333;transform:scaleX(0.8769);">Preencher</span>
<span class="t" style="left:978.5px;top:71.83px;font-size:6.8px;line-height:9px;height:9px;color:#333333;transform:scaleX(0.9143);">Limpar</span>
<span class="t" style="left:1027px;top:62.23px;font-size:6.8px;line-height:9px;height:9px;color:#333333;transform:scaleX(0.8450);">Classificar</span>
<span class="t" style="left:1027.8px;top:70.53px;font-size:6.8px;line-height:9px;height:9px;color:#333333;transform:scaleX(0.8331);">e Filtrar</span>
<span class="t" style="left:1060px;top:62.23px;font-size:6.8px;line-height:9px;height:9px;color:#333333;transform:scaleX(0.8669);">Localizar e</span>
<span class="t" style="left:1057.8px;top:70.53px;font-size:6.8px;line-height:9px;height:9px;color:#333333;transform:scaleX(0.8467);">Selecionar</span>
<span class="t" style="left:1102px;top:62.23px;font-size:6.8px;line-height:9px;height:9px;color:#333333;transform:scaleX(0.8945);">Suplementos</span>
<span class="t" style="left:1149px;top:62.23px;font-size:6.8px;line-height:9px;height:9px;color:#333333;transform:scaleX(0.9446);">Copilot</span>
<span class="t" style="left:34px;top:149.24px;font-size:11px;line-height:14px;height:14px;color:#6c6df5;font-weight:bold;letter-spacing:1.7px;-webkit-text-stroke:0.45px #6c6df5;transform:scaleX(1.1554);">FIRELO</span>
<span class="t" style="left:41.2px;top:163.94px;font-size:4.3px;line-height:7px;height:7px;color:#dcdce2;font-weight:bold;letter-spacing:0.4px;transform:scaleX(1.0481);">CONTABILIDADE</span>
<span class="t" style="left:38px;top:188.65px;font-size:13px;line-height:17px;height:17px;color:#e9e9f1;transform:scaleX(1.0046);">Inicio</span>
<span class="t" style="left:38px;top:217.95px;font-size:13px;line-height:17px;height:17px;color:#e9e9f1;transform:scaleX(0.9940);">Categorias</span>
<span class="t" style="left:38px;top:247.95px;font-size:13px;line-height:17px;height:17px;color:#e9e9f1;transform:scaleX(0.9992);">Lançamentos</span>
<span class="t" style="left:38px;top:277.35px;font-size:13px;line-height:17px;height:17px;color:#e9e9f1;transform:scaleX(0.9904);">Dashboard</span>
<span class="t" style="left:38px;top:306.85px;font-size:13px;line-height:17px;height:17px;color:#e9e9f1;transform:scaleX(1.0086);">Instruções</span>
<span class="t" style="left:139.4px;top:164.31px;font-size:9.8px;line-height:13px;height:13px;color:#0c1f5e;font-weight:bold;transform:scaleX(0.9300);">2.</span>
<span class="t" style="left:152.9px;top:161.17px;font-size:13.6px;line-height:17px;height:17px;color:#0c1f5e;font-weight:bold;-webkit-text-stroke:0.65px #0c1f5e;transform:scaleX(1.0390);">LANÇAMENTOS</span>
<span class="t" style="left:173.75px;top:212.3px;font-size:6.7px;line-height:9px;height:9px;color:#333333;font-weight:bold;transform:scaleX(0.9679);">Categoria das Receitas</span>
<span class="t" style="left:311.25px;top:212.3px;font-size:6.7px;line-height:9px;height:9px;color:#333333;font-weight:bold;transform:scaleX(1.0124);">Orçamento</span>
<span class="t" style="left:415.5px;top:212.3px;font-size:6.7px;line-height:9px;height:9px;color:#333333;font-weight:bold;transform:scaleX(1.0168);">Atual</span>
<span class="t" style="left:492.5px;top:212.3px;font-size:6.7px;line-height:9px;height:9px;color:#333333;font-weight:bold;transform:scaleX(0.9924);">Diferença (R$)</span>
<span class="t" style="left:608.75px;top:212.3px;font-size:6.7px;line-height:9px;height:9px;color:#333333;font-weight:bold;transform:scaleX(0.9855);">% Orçamento</span>
<span class="t" style="left:750.75px;top:212.3px;font-size:6.7px;line-height:9px;height:9px;color:#333333;font-weight:bold;transform:scaleX(0.9602);">Categoria das Despesas</span>
<span class="t" style="left:890px;top:212.3px;font-size:6.7px;line-height:9px;height:9px;color:#333333;font-weight:bold;transform:scaleX(1.0124);">Orçamento</span>
<span class="t" style="left:992px;top:212.3px;font-size:6.7px;line-height:9px;height:9px;color:#333333;font-weight:bold;transform:scaleX(1.0318);">Atual</span>
<span class="t" style="left:1066.75px;top:212.3px;font-size:6.7px;line-height:9px;height:9px;color:#333333;font-weight:bold;transform:scaleX(1.0181);">Diferença ($)</span>
<span class="t" style="left:1181.75px;top:212.3px;font-size:6.7px;line-height:9px;height:9px;color:#333333;font-weight:bold;transform:scaleX(0.9913);">% Orçamento</span>
<span class="t" style="left:153.75px;top:196.48px;font-size:7.2px;line-height:11px;height:11px;color:#333333;font-weight:bold;transform:scaleX(1.0156);">2024</span>
<span class="t" style="left:731.25px;top:196.48px;font-size:7.2px;line-height:11px;height:11px;color:#333333;font-weight:bold;transform:scaleX(1.0156);">2024</span>
<span class="t" style="left:50.5px;top:695.51px;font-size:7px;line-height:9px;height:9px;color:#3d3d3d;transform:scaleX(0.9817);">INICIO</span>
<span class="t" style="left:86.5px;top:695.51px;font-size:7px;line-height:9px;height:9px;color:#3d3d3d;transform:scaleX(0.9253);">CATEGORIAS</span>
<span class="t" style="left:143px;top:694.71px;font-size:7px;line-height:9px;height:9px;color:#1f1f1f;font-weight:bold;transform:scaleX(1.0032);">LANÇAMENTOS</span>
<span class="t" style="left:211.5px;top:695.51px;font-size:7px;line-height:9px;height:9px;color:#3d3d3d;transform:scaleX(0.9584);">DASHBOARD</span>
<span class="t" style="left:269.5px;top:695.51px;font-size:7px;line-height:9px;height:9px;color:#3d3d3d;transform:scaleX(0.9149);">INSTRUÇÕES</span>
<span class="t" style="left:340.5px;top:693.62px;font-size:9px;line-height:12px;height:12px;color:#555;transform:scaleX(0.9496);">+</span>
<span class="t" style="left:0px;top:710.07px;font-size:6.9px;line-height:9px;height:9px;color:#3d3d3d;transform:scaleX(0.9173);">nto</span>
<span class="t" style="left:45.4px;top:709.97px;font-size:6.9px;line-height:9px;height:9px;color:#333;font-weight:bold;transform:scaleX(0.7950);">Acessibilidade: investigar</span>
</div>
</div>
</body></html>
